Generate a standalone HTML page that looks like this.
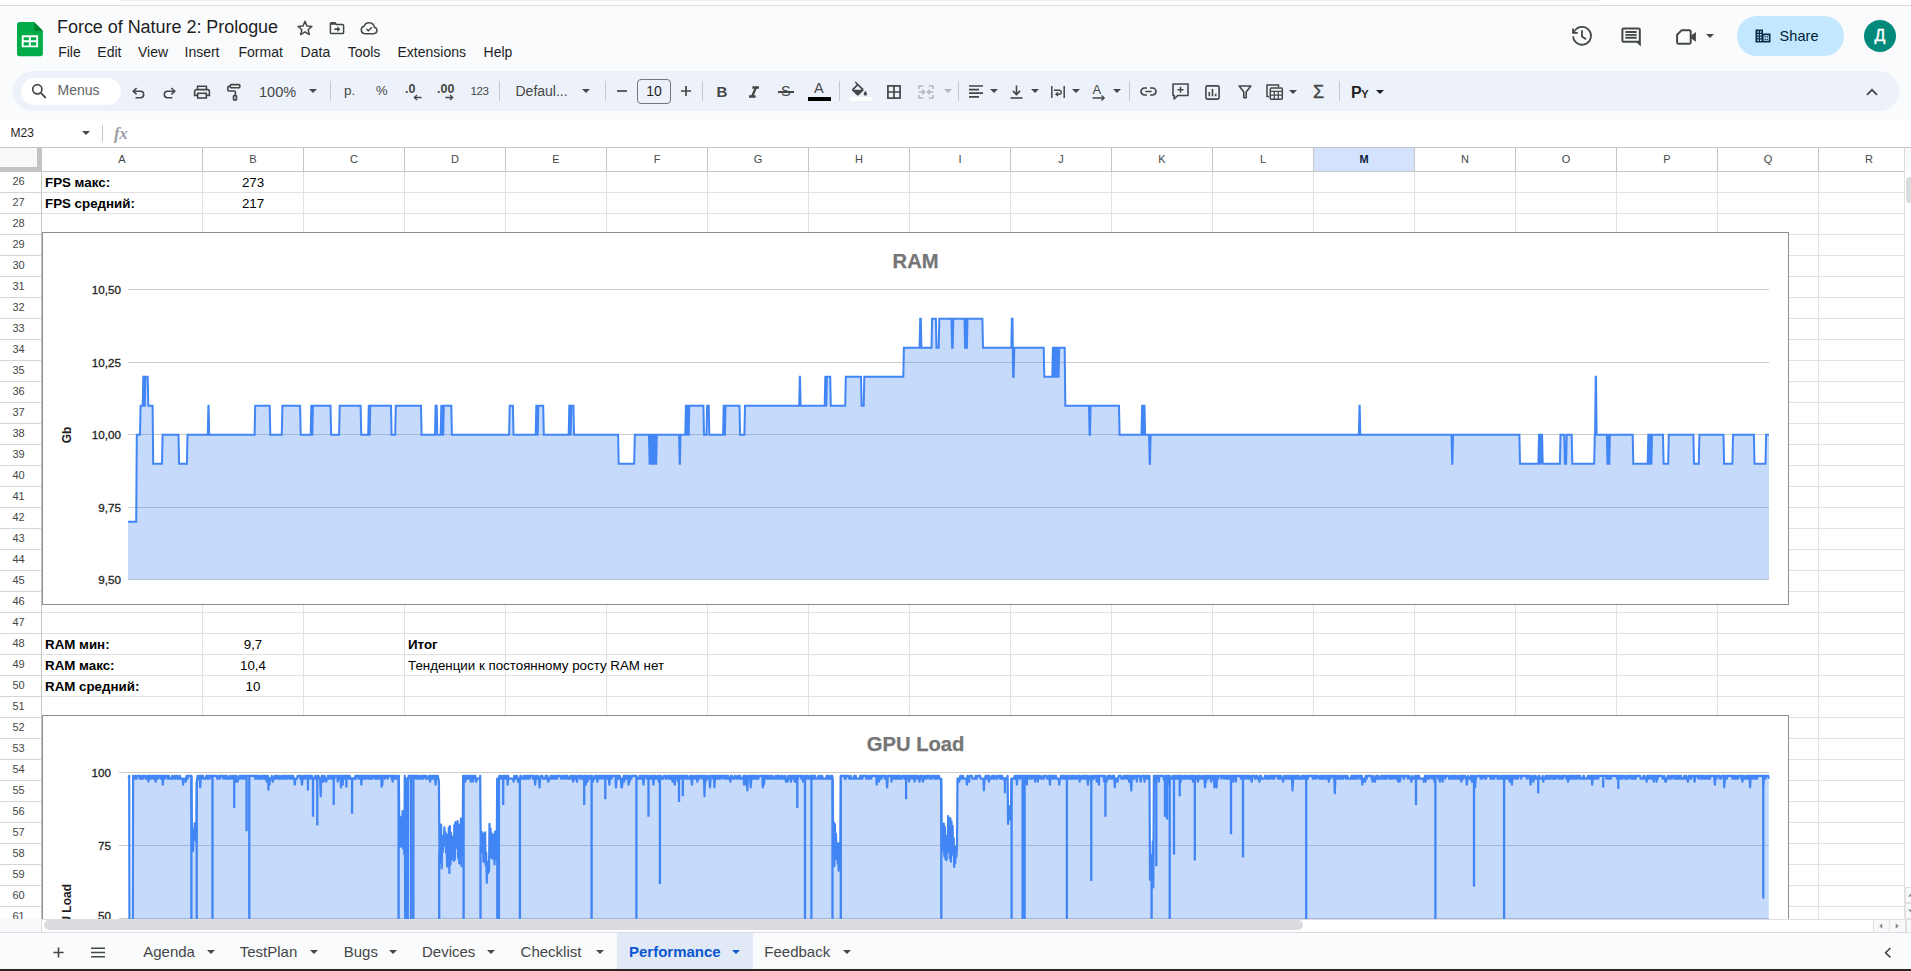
<!DOCTYPE html><html><head><meta charset="utf-8"><title>Force of Nature 2: Prologue</title><style>
*{box-sizing:border-box;margin:0;padding:0}
html,body{width:1911px;height:971px;overflow:hidden;background:#f9fbfd;font-family:"Liberation Sans",sans-serif;color:#1f1f1f}
.abs{position:absolute}
.t{position:absolute;white-space:nowrap;line-height:1}
.ic{position:absolute;overflow:visible}
.vsep{position:absolute;width:1px;background:#c7c7c7}
.hl{position:absolute;height:1px;background:#e1e1e1}
.vl{position:absolute;width:1px;background:#e1e1e1}
.rh{position:absolute;left:0;width:37px;text-align:center;font-size:11px;color:#444746;line-height:1}
.ch{position:absolute;top:153px;width:40px;margin-left:-20px;text-align:center;font-size:11px;color:#444746;line-height:1}
.cell{position:absolute;font-size:13.33px;line-height:1;white-space:nowrap;color:#000}
.b{font-weight:bold}
.tab{position:absolute;top:944px;font-size:15px;line-height:1;color:#444746;white-space:nowrap}
.dd{position:absolute;width:0;height:0;border-left:4px solid transparent;border-right:4px solid transparent;border-top:4px solid #444746}
</style></head><body>
<div class="abs" style="left:0;top:0;width:1911px;height:5px;background:#fff"></div>
<div class="abs" style="left:0;top:5px;width:1911px;height:1px;background:#dadce0"></div>
<div class="abs" style="left:116px;top:-13px;width:1488px;height:14px;border-radius:14px;background:#eceff1"></div>
<svg class="ic" style="left:17.1px;top:21.8px" width="26" height="35" viewBox="0 0 26 35">
<path d="M2.6 0H17.1L25.9 8.8V31.6a2.6 2.6 0 0 1-2.6 2.6H2.6a2.6 2.6 0 0 1-2.6-2.6V2.6a2.6 2.6 0 0 1 2.6-2.6z" fill="#00ac47"/>
<path d="M17.1 0.2L25.9 8.8H17.1z" fill="#00832d"/>
<path d="M4.75 13.3h16.35v12H4.75zM6.65 15.2v3.15h5.25V15.2zM13.8 15.2v3.15h5.4V15.2zM6.65 20.2v3.2h5.25v-3.2zM13.8 20.2v3.2h5.4v-3.2z" fill="#fff" fill-rule="evenodd"/>
</svg>
<div class="t" id="title" style="left:57px;top:18px;font-size:18px;letter-spacing:-0.04px;color:#1f1f1f">Force of Nature 2: Prologue</div>
<svg class="ic" style="left:296px;top:19px" width="18" height="18" viewBox="0 0 24 24"><path d="M12 3.2l2.6 6.1 6.6.6-5 4.4 1.5 6.5L12 17.3l-5.7 3.5 1.5-6.5-5-4.4 6.6-.6z" fill="none" stroke="#444746" stroke-width="2" stroke-linejoin="round"/></svg>
<svg class="ic" style="left:328px;top:19px" width="18" height="18" viewBox="0 0 24 24"><path d="M3.2 6.5a1.5 1.5 0 0 1 1.5-1.5h4.6l2 2.4h8a1.5 1.5 0 0 1 1.5 1.5v9a1.5 1.5 0 0 1-1.5 1.5H4.7a1.5 1.5 0 0 1-1.5-1.5z" fill="none" stroke="#444746" stroke-width="2" stroke-linejoin="round"/><path d="M3.2 5h6.2l2 2.6H3.2z" fill="#444746"/><path d="M8.5 12.4h4v-2.6l4 3.7-4 3.7v-2.6h-4z" fill="#444746"/></svg>
<svg class="ic" style="left:359px;top:19px" width="20" height="18" viewBox="0 0 26 24"><path d="M7 19.5h12.5a4.3 4.3 0 0 0 .6-8.5A7 7 0 0 0 6.5 9.7 5 5 0 0 0 7 19.5z" fill="none" stroke="#444746" stroke-width="2" stroke-linejoin="round"/><path d="M9.5 13.2l2.6 2.6 4.8-4.8" fill="none" stroke="#444746" stroke-width="1.9"/></svg>
<div class="t" style="left:58.2px;top:45px;font-size:14px;color:#1f1f1f">File</div>
<div class="t" style="left:97.3px;top:45px;font-size:14px;color:#1f1f1f">Edit</div>
<div class="t" style="left:138.0px;top:45px;font-size:14px;color:#1f1f1f">View</div>
<div class="t" style="left:184.5px;top:45px;font-size:14px;color:#1f1f1f">Insert</div>
<div class="t" style="left:238.5px;top:45px;font-size:14px;color:#1f1f1f">Format</div>
<div class="t" style="left:300.6px;top:45px;font-size:14px;color:#1f1f1f">Data</div>
<div class="t" style="left:347.7px;top:45px;font-size:14px;color:#1f1f1f">Tools</div>
<div class="t" style="left:397.5px;top:45px;font-size:14px;color:#1f1f1f">Extensions</div>
<div class="t" style="left:483.6px;top:45px;font-size:14px;color:#1f1f1f">Help</div>
<svg class="ic" style="left:1570px;top:24px" width="24" height="24" viewBox="0 0 24 24"><path d="M3.16 12.27A8.9 8.9 0 1 0 4.76 6.7" fill="none" stroke="#444746" stroke-width="1.8"/><path d="M3 4.4V8.95H7.7" fill="none" stroke="#444746" stroke-width="1.8"/><path d="M3 5.4L6.8 8.95H3z" fill="#444746"/><path d="M12 6.2V12.4L16.1 15.2" fill="none" stroke="#444746" stroke-width="1.8"/></svg>
<svg class="ic" style="left:1619px;top:24px" width="24" height="24" viewBox="0 0 24 24"><rect x="3.4" y="4.4" width="17.4" height="13.3" rx="1.2" fill="none" stroke="#444746" stroke-width="2"/><path d="M17 17.7L21.8 22.6V17z" fill="#444746"/><path d="M6.4 8h11.3M6.4 10.9h11.3M6.4 13.8h11.3" stroke="#444746" stroke-width="1.9"/></svg>
<svg class="ic" style="left:1674px;top:24px" width="24" height="24" viewBox="0 0 24 24"><path d="M7.5 6.35H15.2a1.5 1.5 0 0 1 1.5 1.5V18.15a1.5 1.5 0 0 1-1.5 1.5H4.6a1.5 1.5 0 0 1-1.5-1.5V10.8z" fill="none" stroke="#444746" stroke-width="2" stroke-linejoin="round"/><path d="M17.2 11.4l4.7-3.4v9.8l-4.7-3.4z" fill="#444746"/></svg>
<div class="dd" style="left:1706px;top:34px"></div>
<div class="abs" style="left:1737px;top:16px;width:107px;height:40px;border-radius:20px;background:#c2e7ff"></div>
<svg class="ic" style="left:1755px;top:28px" width="16" height="16" viewBox="0 0 16 16"><path d="M0.5 1.5h7.5v4h7.5v9H0.5z" fill="#0b2a4a"/><path d="M2.3 3.3h1.5v1.5H2.3zM5 3.3h1.5v1.5H5zM2.3 6h1.5v1.5H2.3zM5 6h1.5v1.5H5zM2.3 8.7h1.5v1.5H2.3zM5 8.7h1.5v1.5H5zM2.3 11.4h1.5v1.5H2.3zM5 11.4h1.5v1.5H5zM8.6 7.2h5.2v5.6H8.6zM9.6 8.3v1.3h1.3V8.3zM9.6 10.7v1.3h1.3v-1.3zM11.6 8.3v1.3h1.3V8.3zM11.6 10.7v1.3h1.3v-1.3z" fill="#c2e7ff" fill-rule="evenodd"/></svg>
<div class="t" style="left:1779.5px;top:29px;font-size:14.5px;color:#001d35;font-weight:500;letter-spacing:0.1px">Share</div>
<div class="abs" style="left:1864px;top:20px;width:32px;height:32px;border-radius:16px;background:#00897b"></div>
<div class="t" style="left:1864px;top:27.5px;width:32px;text-align:center;font-size:16px;color:#fff;-webkit-text-stroke:0.4px #fff">Д</div>
<div class="abs" style="left:13px;top:71px;width:1886px;height:40px;border-radius:20px;background:#edf2fa"></div>
<div class="abs" style="left:21px;top:77.5px;width:100px;height:27px;border-radius:14px;background:#fff"></div>
<svg class="ic" style="left:30.5px;top:83.0px" width="16" height="16" viewBox="0 0 16 16"><circle cx="6.3" cy="6.3" r="4.6" fill="none" stroke="#444746" stroke-width="1.7"/><path d="M9.8 9.8l5 5" stroke="#444746" stroke-width="1.9"/></svg>
<div class="t" style="left:57.5px;top:83.2px;font-size:14px;color:#5f6368">Menus</div>
<svg class="ic" style="left:131.0px;top:85.8px" width="14" height="13" viewBox="0 0 14 13"><path d="M2.8 5.2h6.6a3.3 3.3 0 0 1 0 6.6H4.6" fill="none" stroke="#444746" stroke-width="1.6"/><path d="M5.6 2L2.3 5.2l3.3 3.2" fill="none" stroke="#444746" stroke-width="1.6"/></svg>
<svg class="ic" style="left:163.0px;top:85.8px" width="14" height="13" viewBox="0 0 14 13"><path d="M11.2 5.2H4.6a3.3 3.3 0 0 0 0 6.6h4.8" fill="none" stroke="#444746" stroke-width="1.6"/><path d="M8.4 2l3.3 3.2-3.3 3.2" fill="none" stroke="#444746" stroke-width="1.6"/></svg>
<svg class="ic" style="left:193.0px;top:84.0px" width="18" height="16" viewBox="0 0 18 16"><path d="M4.6 5.6V2.3h8.8v3.3" fill="none" stroke="#444746" stroke-width="1.6"/><path d="M4.3 11.4H1.6V7.6a2 2 0 0 1 2-2h10.8a2 2 0 0 1 2 2v3.8h-2.7" fill="none" stroke="#444746" stroke-width="1.6"/><rect x="4.7" y="9.3" width="8.6" height="4.7" fill="none" stroke="#444746" stroke-width="1.6"/></svg>
<svg class="ic" style="left:225.5px;top:82.6px" width="16" height="18" viewBox="0 0 16 18"><rect x="4.3" y="1.6" width="9.5" height="3.2" rx="0.9" fill="none" stroke="#444746" stroke-width="1.6"/><path d="M4.3 3.4H3a1.2 1.2 0 0 0-1.2 1.2V6.8a1.2 1.2 0 0 0 1.2 1.2h5.2a1.2 1.2 0 0 1 1.2 1.2v3" fill="none" stroke="#444746" stroke-width="1.6"/><rect x="7.5" y="12.6" width="3" height="4.3" rx="0.7" fill="none" stroke="#444746" stroke-width="1.6"/></svg>
<div class="t" style="left:259px;top:85px;font-size:14.5px;color:#444746">100%</div>
<div class="dd" style="left:309.0px;top:89.0px;border-top-color:#444746"></div>
<div class="vsep" style="left:330.0px;top:81px;height:20px"></div>
<div class="t" style="left:344px;top:84px;font-size:13.5px;color:#444746">р.</div>
<div class="t" style="left:376px;top:84px;font-size:13px;color:#444746">%</div>
<div class="t" style="left:405px;top:83px;font-size:12.5px;color:#444746;font-weight:bold">.0</div>
<svg class="ic" style="left:413.0px;top:93.5px" width="9" height="7" viewBox="0 0 9 7"><path d="M8.5 3.5H1.5M4 1L1.3 3.5 4 6" fill="none" stroke="#444746" stroke-width="1.3"/></svg>
<div class="t" style="left:437px;top:83px;font-size:12.5px;color:#444746;font-weight:bold">.00</div>
<svg class="ic" style="left:445.0px;top:93.5px" width="9" height="7" viewBox="0 0 9 7"><path d="M0.5 3.5h7M5 1l2.7 2.5L5 6" fill="none" stroke="#444746" stroke-width="1.3"/></svg>
<div class="t" style="left:470.5px;top:85.5px;font-size:11.5px;color:#444746;letter-spacing:-0.4px">123</div>
<div class="vsep" style="left:499.0px;top:81px;height:20px"></div>
<div class="t" style="left:515.5px;top:84px;font-size:14px;color:#444746">Defaul...</div>
<div class="dd" style="left:582.0px;top:89.0px;border-top-color:#444746"></div>
<div class="vsep" style="left:605.0px;top:81px;height:20px"></div>
<svg class="ic" style="left:615.5px;top:85.0px" width="12" height="12" viewBox="0 0 12 12"><path d="M1 6h10" stroke="#444746" stroke-width="1.7"/></svg>
<div class="abs" style="left:637px;top:79px;width:34px;height:24.5px;border:1px solid #747775;border-radius:4px"></div>
<div class="t" style="left:637px;top:84px;width:34px;text-align:center;font-size:14px;color:#1f1f1f">10</div>
<svg class="ic" style="left:680.0px;top:85.0px" width="12" height="12" viewBox="0 0 12 12"><path d="M1 6h10M6 1v10" stroke="#444746" stroke-width="1.7"/></svg>
<div class="vsep" style="left:702.0px;top:81px;height:20px"></div>
<div class="t" style="left:716.5px;top:83.6px;font-size:15px;color:#444746;font-weight:bold">B</div>
<svg class="ic" style="left:748.0px;top:84.5px" width="12" height="14" viewBox="0 0 12 14"><path d="M4 0v3h2.21l-3.42 8H0v3h8v-3H5.79l3.42-8H12V0z" fill="#444746" transform="translate(1,1.2) scale(0.833)"/></svg>
<div class="t" style="left:781px;top:84px;font-size:14.5px;color:#444746">S</div>
<div class="abs" style="left:778px;top:91px;width:16px;height:1.6px;background:#444746"></div>
<div class="t" style="left:814px;top:81px;font-size:14.5px;color:#444746">A</div>
<div class="abs" style="left:808px;top:97px;width:23px;height:4px;background:#000"></div>
<div class="vsep" style="left:839.0px;top:81px;height:20px"></div>
<svg class="ic" style="left:850.3px;top:80.6px" width="19" height="15" viewBox="2.5 -0.5 19 18"><path d="M16.56 8.94L7.62 0 6.21 1.41l2.38 2.38-5.15 5.15c-.59.59-.59 1.54 0 2.12l5.5 5.5c.29.29.68.44 1.06.44s.77-.15 1.06-.44l5.5-5.5c.59-.58.59-1.53 0-2.12zM5.21 10L10 5.21 14.79 10H5.21zM19 11.5s-2 2.17-2 3.5c0 1.1.9 2 2 2s2-.9 2-2c0-1.33-2-3.5-2-3.5z" fill="#444746"/></svg>
<div class="abs" style="left:849.5px;top:97px;width:22.5px;height:4px;background:#fff"></div>
<svg class="ic" style="left:887.0px;top:84.5px" width="14" height="14" viewBox="0 0 14 14"><rect x="0.9" y="0.9" width="12.2" height="12.2" fill="none" stroke="#444746" stroke-width="1.7"/><path d="M7 1v12M1 7h12" stroke="#444746" stroke-width="1.7"/></svg>
<svg class="ic" style="left:918.0px;top:84.8px" width="16" height="14" viewBox="0 0 16 14"><path d="M1 4V1h4.2M10.8 1H15v3M1 10v3h4.2M10.8 13H15v-3" fill="none" stroke="#b4b7ba" stroke-width="1.6"/><path d="M0.8 7h5.4M4.2 4.7L6.6 7 4.2 9.3M15.2 7H9.8M11.8 4.7L9.4 7l2.4 2.3" fill="none" stroke="#b4b7ba" stroke-width="1.5"/></svg>
<div class="dd" style="left:944.0px;top:89.0px;border-top-color:#b4b7ba"></div>
<div class="vsep" style="left:958.0px;top:81px;height:20px"></div>
<svg class="ic" style="left:968.5px;top:85.3px" width="14" height="13" viewBox="0 0 14 13"><path d="M0 1h14M0 4.6h10M0 8.2h14M0 11.8h10" stroke="#444746" stroke-width="1.7"/></svg>
<div class="dd" style="left:990.0px;top:89.0px;border-top-color:#444746"></div>
<svg class="ic" style="left:1010.0px;top:84.5px" width="13" height="14" viewBox="0 0 13 14"><path d="M6.5 0.5v8.7M2.9 5.9l3.6 3.6 3.6-3.6" fill="none" stroke="#444746" stroke-width="1.6"/><path d="M0.5 13h12" stroke="#444746" stroke-width="1.6"/></svg>
<div class="dd" style="left:1031.0px;top:89.0px;border-top-color:#444746"></div>
<svg class="ic" style="left:1051.0px;top:85.5px" width="14" height="12" viewBox="0 0 14 12"><path d="M0.8 0v12M13.2 0v12" stroke="#444746" stroke-width="1.5"/><path d="M3 4.2h5.2a2 2 0 0 1 0 4H5.4" fill="none" stroke="#444746" stroke-width="1.4"/><path d="M7 6.3L4.9 8.2 7 10.1" fill="none" stroke="#444746" stroke-width="1.3"/></svg>
<div class="dd" style="left:1072.0px;top:89.0px;border-top-color:#444746"></div>
<div class="t" style="left:1092.5px;top:83px;font-size:13px;color:#444746">A</div>
<svg class="ic" style="left:1092.0px;top:95.0px" width="14" height="6" viewBox="0 0 14 6"><path d="M0.5 3h11.5M9.5 0.6L12.2 3 9.5 5.4" fill="none" stroke="#444746" stroke-width="1.3"/></svg>
<div class="dd" style="left:1113.0px;top:89.0px;border-top-color:#444746"></div>
<div class="vsep" style="left:1129.0px;top:81px;height:20px"></div>
<svg class="ic" style="left:1140.2px;top:87.0px" width="17" height="9" viewBox="0 0 17 9"><path d="M7 1H4.5a3.5 3.5 0 0 0 0 7H7M10 1h2.5a3.5 3.5 0 0 1 0 7H10M5.3 4.5h6.4" fill="none" stroke="#444746" stroke-width="1.7"/></svg>
<svg class="ic" style="left:1172.2px;top:83.0px" width="17" height="17" viewBox="0 0 17 17"><path d="M16 1H1v11.5h1.2V16l3.5-3.5H16z" fill="none" stroke="#444746" stroke-width="1.6" stroke-linejoin="round"/><path d="M8.5 3.8v6M5.5 6.8h6" stroke="#444746" stroke-width="1.5"/></svg>
<svg class="ic" style="left:1205.3px;top:84.8px" width="15" height="15" viewBox="0 0 15 15"><rect x="0.9" y="0.9" width="13.2" height="13.2" rx="1.5" fill="none" stroke="#444746" stroke-width="1.6"/><path d="M4.3 11.3V7M7.5 11.3V4M10.7 11.3V8.8" stroke="#444746" stroke-width="1.6"/></svg>
<svg class="ic" style="left:1237.8px;top:85.3px" width="14" height="14" viewBox="0 0 14 14"><path d="M1.2 1h11.6L8.2 7v5.8H5.8V7z" fill="none" stroke="#444746" stroke-width="1.6" stroke-linejoin="round"/></svg>
<svg class="ic" style="left:1265.9px;top:84.3px" width="17" height="16" viewBox="0 0 17 16"><path d="M3.2 12.5H1V1h11.5v2" fill="none" stroke="#444746" stroke-width="1.5"/><rect x="4.3" y="4" width="12" height="11.2" rx="1" fill="none" stroke="#444746" stroke-width="1.5"/><path d="M4.3 7.3h12M8.3 7.3v8M12.3 7.3v8M4.3 11.2h12" stroke="#444746" stroke-width="1.2"/></svg>
<div class="dd" style="left:1289.0px;top:90.0px;border-top-color:#444746"></div>
<div class="t" style="left:1313px;top:83px;font-size:18px;color:#444746;-webkit-text-stroke:0.4px #444746">Σ</div>
<div class="vsep" style="left:1339.0px;top:81px;height:20px"></div>
<div class="t" style="left:1351px;top:85px;font-size:16px;color:#1f1f1f;font-weight:bold;letter-spacing:-0.5px">P<span style="font-size:11px">Y</span></div>
<div class="dd" style="left:1376.0px;top:90.0px;border-top-color:#1f1f1f"></div>
<svg class="ic" style="left:1866.0px;top:88.0px" width="12" height="8" viewBox="0 0 12 8"><path d="M1 6.8L6 1.8l5 5" fill="none" stroke="#444746" stroke-width="1.7"/></svg>
<div class="abs" style="left:0;top:119px;width:1911px;height:28px;background:#fff"></div>
<div class="t" style="left:10.5px;top:127px;font-size:12px;color:#1f1f1f">M23</div>
<div class="dd" style="left:82px;top:131px"></div>
<div class="vsep" style="left:102px;top:125px;height:17px"></div>
<div class="t" style="left:114px;top:125px;font-size:17px;font-weight:bold;color:#9aa0a6;font-style:italic;font-family:'Liberation Serif',serif;letter-spacing:-0.5px">fx</div>
<div class="abs" id="grid" style="left:0;top:147px;width:1911px;height:772px;background:#fff;overflow:hidden">
<div class="abs" style="left:1314px;top:1px;width:100px;height:23px;background:#d3e3fd"></div>
<div class="hl" style="left:42px;top:45px;width:1863px"></div>
<div class="hl" style="left:0;top:45px;width:42px;background:#d5d7d6"></div>
<div class="hl" style="left:42px;top:66px;width:1863px"></div>
<div class="hl" style="left:0;top:66px;width:42px;background:#d5d7d6"></div>
<div class="hl" style="left:42px;top:87px;width:1863px"></div>
<div class="hl" style="left:0;top:87px;width:42px;background:#d5d7d6"></div>
<div class="hl" style="left:42px;top:108px;width:1863px"></div>
<div class="hl" style="left:0;top:108px;width:42px;background:#d5d7d6"></div>
<div class="hl" style="left:42px;top:129px;width:1863px"></div>
<div class="hl" style="left:0;top:129px;width:42px;background:#d5d7d6"></div>
<div class="hl" style="left:42px;top:150px;width:1863px"></div>
<div class="hl" style="left:0;top:150px;width:42px;background:#d5d7d6"></div>
<div class="hl" style="left:42px;top:171px;width:1863px"></div>
<div class="hl" style="left:0;top:171px;width:42px;background:#d5d7d6"></div>
<div class="hl" style="left:42px;top:192px;width:1863px"></div>
<div class="hl" style="left:0;top:192px;width:42px;background:#d5d7d6"></div>
<div class="hl" style="left:42px;top:213px;width:1863px"></div>
<div class="hl" style="left:0;top:213px;width:42px;background:#d5d7d6"></div>
<div class="hl" style="left:42px;top:234px;width:1863px"></div>
<div class="hl" style="left:0;top:234px;width:42px;background:#d5d7d6"></div>
<div class="hl" style="left:42px;top:255px;width:1863px"></div>
<div class="hl" style="left:0;top:255px;width:42px;background:#d5d7d6"></div>
<div class="hl" style="left:42px;top:276px;width:1863px"></div>
<div class="hl" style="left:0;top:276px;width:42px;background:#d5d7d6"></div>
<div class="hl" style="left:42px;top:297px;width:1863px"></div>
<div class="hl" style="left:0;top:297px;width:42px;background:#d5d7d6"></div>
<div class="hl" style="left:42px;top:318px;width:1863px"></div>
<div class="hl" style="left:0;top:318px;width:42px;background:#d5d7d6"></div>
<div class="hl" style="left:42px;top:339px;width:1863px"></div>
<div class="hl" style="left:0;top:339px;width:42px;background:#d5d7d6"></div>
<div class="hl" style="left:42px;top:360px;width:1863px"></div>
<div class="hl" style="left:0;top:360px;width:42px;background:#d5d7d6"></div>
<div class="hl" style="left:42px;top:381px;width:1863px"></div>
<div class="hl" style="left:0;top:381px;width:42px;background:#d5d7d6"></div>
<div class="hl" style="left:42px;top:402px;width:1863px"></div>
<div class="hl" style="left:0;top:402px;width:42px;background:#d5d7d6"></div>
<div class="hl" style="left:42px;top:423px;width:1863px"></div>
<div class="hl" style="left:0;top:423px;width:42px;background:#d5d7d6"></div>
<div class="hl" style="left:42px;top:444px;width:1863px"></div>
<div class="hl" style="left:0;top:444px;width:42px;background:#d5d7d6"></div>
<div class="hl" style="left:42px;top:465px;width:1863px"></div>
<div class="hl" style="left:0;top:465px;width:42px;background:#d5d7d6"></div>
<div class="hl" style="left:42px;top:486px;width:1863px"></div>
<div class="hl" style="left:0;top:486px;width:42px;background:#d5d7d6"></div>
<div class="hl" style="left:42px;top:507px;width:1863px"></div>
<div class="hl" style="left:0;top:507px;width:42px;background:#d5d7d6"></div>
<div class="hl" style="left:42px;top:528px;width:1863px"></div>
<div class="hl" style="left:0;top:528px;width:42px;background:#d5d7d6"></div>
<div class="hl" style="left:42px;top:549px;width:1863px"></div>
<div class="hl" style="left:0;top:549px;width:42px;background:#d5d7d6"></div>
<div class="hl" style="left:42px;top:570px;width:1863px"></div>
<div class="hl" style="left:0;top:570px;width:42px;background:#d5d7d6"></div>
<div class="hl" style="left:42px;top:591px;width:1863px"></div>
<div class="hl" style="left:0;top:591px;width:42px;background:#d5d7d6"></div>
<div class="hl" style="left:42px;top:612px;width:1863px"></div>
<div class="hl" style="left:0;top:612px;width:42px;background:#d5d7d6"></div>
<div class="hl" style="left:42px;top:633px;width:1863px"></div>
<div class="hl" style="left:0;top:633px;width:42px;background:#d5d7d6"></div>
<div class="hl" style="left:42px;top:654px;width:1863px"></div>
<div class="hl" style="left:0;top:654px;width:42px;background:#d5d7d6"></div>
<div class="hl" style="left:42px;top:675px;width:1863px"></div>
<div class="hl" style="left:0;top:675px;width:42px;background:#d5d7d6"></div>
<div class="hl" style="left:42px;top:696px;width:1863px"></div>
<div class="hl" style="left:0;top:696px;width:42px;background:#d5d7d6"></div>
<div class="hl" style="left:42px;top:717px;width:1863px"></div>
<div class="hl" style="left:0;top:717px;width:42px;background:#d5d7d6"></div>
<div class="hl" style="left:42px;top:738px;width:1863px"></div>
<div class="hl" style="left:0;top:738px;width:42px;background:#d5d7d6"></div>
<div class="hl" style="left:42px;top:759px;width:1863px"></div>
<div class="hl" style="left:0;top:759px;width:42px;background:#d5d7d6"></div>
<div class="hl" style="left:42px;top:780px;width:1863px"></div>
<div class="hl" style="left:0;top:780px;width:42px;background:#d5d7d6"></div>
<div class="vl" style="left:202px;top:25px;height:750px"></div>
<div class="vl" style="left:202px;top:1px;height:23px;background:#c4c7c5"></div>
<div class="vl" style="left:303px;top:25px;height:750px"></div>
<div class="vl" style="left:303px;top:1px;height:23px;background:#c4c7c5"></div>
<div class="vl" style="left:404px;top:25px;height:750px"></div>
<div class="vl" style="left:404px;top:1px;height:23px;background:#c4c7c5"></div>
<div class="vl" style="left:505px;top:25px;height:750px"></div>
<div class="vl" style="left:505px;top:1px;height:23px;background:#c4c7c5"></div>
<div class="vl" style="left:606px;top:25px;height:750px"></div>
<div class="vl" style="left:606px;top:1px;height:23px;background:#c4c7c5"></div>
<div class="vl" style="left:707px;top:25px;height:750px"></div>
<div class="vl" style="left:707px;top:1px;height:23px;background:#c4c7c5"></div>
<div class="vl" style="left:808px;top:25px;height:750px"></div>
<div class="vl" style="left:808px;top:1px;height:23px;background:#c4c7c5"></div>
<div class="vl" style="left:909px;top:25px;height:750px"></div>
<div class="vl" style="left:909px;top:1px;height:23px;background:#c4c7c5"></div>
<div class="vl" style="left:1010px;top:25px;height:750px"></div>
<div class="vl" style="left:1010px;top:1px;height:23px;background:#c4c7c5"></div>
<div class="vl" style="left:1111px;top:25px;height:750px"></div>
<div class="vl" style="left:1111px;top:1px;height:23px;background:#c4c7c5"></div>
<div class="vl" style="left:1212px;top:25px;height:750px"></div>
<div class="vl" style="left:1212px;top:1px;height:23px;background:#c4c7c5"></div>
<div class="vl" style="left:1313px;top:25px;height:750px"></div>
<div class="vl" style="left:1313px;top:1px;height:23px;background:#c4c7c5"></div>
<div class="vl" style="left:1414px;top:25px;height:750px"></div>
<div class="vl" style="left:1414px;top:1px;height:23px;background:#c4c7c5"></div>
<div class="vl" style="left:1515px;top:25px;height:750px"></div>
<div class="vl" style="left:1515px;top:1px;height:23px;background:#c4c7c5"></div>
<div class="vl" style="left:1616px;top:25px;height:750px"></div>
<div class="vl" style="left:1616px;top:1px;height:23px;background:#c4c7c5"></div>
<div class="vl" style="left:1717px;top:25px;height:750px"></div>
<div class="vl" style="left:1717px;top:1px;height:23px;background:#c4c7c5"></div>
<div class="vl" style="left:1818px;top:25px;height:750px"></div>
<div class="vl" style="left:1818px;top:1px;height:23px;background:#c4c7c5"></div>
<div class="abs" style="left:0;top:0;width:1911px;height:1px;background:#c4c7c5"></div>
<div class="abs" style="left:0;top:24px;width:1905px;height:1px;background:#c4c7c5"></div>
<div class="abs" style="left:41px;top:1px;width:1px;height:771px;background:#c4c7c5"></div>
<div class="abs" style="left:0;top:1px;width:41px;height:23px;background:#c3c3c3"></div>
<div class="abs" style="left:0;top:1px;width:37px;height:19px;background:#f8f9fa"></div>
<div class="ch" style="left:122px;top:7px;">A</div>
<div class="ch" style="left:253px;top:7px;">B</div>
<div class="ch" style="left:354px;top:7px;">C</div>
<div class="ch" style="left:455px;top:7px;">D</div>
<div class="ch" style="left:556px;top:7px;">E</div>
<div class="ch" style="left:657px;top:7px;">F</div>
<div class="ch" style="left:758px;top:7px;">G</div>
<div class="ch" style="left:859px;top:7px;">H</div>
<div class="ch" style="left:960px;top:7px;">I</div>
<div class="ch" style="left:1061px;top:7px;">J</div>
<div class="ch" style="left:1162px;top:7px;">K</div>
<div class="ch" style="left:1263px;top:7px;">L</div>
<div class="ch" style="left:1364px;top:7px;font-weight:bold;color:#0b1d42;">M</div>
<div class="ch" style="left:1465px;top:7px;">N</div>
<div class="ch" style="left:1566px;top:7px;">O</div>
<div class="ch" style="left:1667px;top:7px;">P</div>
<div class="ch" style="left:1768px;top:7px;">Q</div>
<div class="ch" style="left:1869px;top:7px;">R</div>
<div class="rh" style="top:29px">26</div>
<div class="rh" style="top:50px">27</div>
<div class="rh" style="top:71px">28</div>
<div class="rh" style="top:92px">29</div>
<div class="rh" style="top:113px">30</div>
<div class="rh" style="top:134px">31</div>
<div class="rh" style="top:155px">32</div>
<div class="rh" style="top:176px">33</div>
<div class="rh" style="top:197px">34</div>
<div class="rh" style="top:218px">35</div>
<div class="rh" style="top:239px">36</div>
<div class="rh" style="top:260px">37</div>
<div class="rh" style="top:281px">38</div>
<div class="rh" style="top:302px">39</div>
<div class="rh" style="top:323px">40</div>
<div class="rh" style="top:344px">41</div>
<div class="rh" style="top:365px">42</div>
<div class="rh" style="top:386px">43</div>
<div class="rh" style="top:407px">44</div>
<div class="rh" style="top:428px">45</div>
<div class="rh" style="top:449px">46</div>
<div class="rh" style="top:470px">47</div>
<div class="rh" style="top:491px">48</div>
<div class="rh" style="top:512px">49</div>
<div class="rh" style="top:533px">50</div>
<div class="rh" style="top:554px">51</div>
<div class="rh" style="top:575px">52</div>
<div class="rh" style="top:596px">53</div>
<div class="rh" style="top:617px">54</div>
<div class="rh" style="top:638px">55</div>
<div class="rh" style="top:659px">56</div>
<div class="rh" style="top:680px">57</div>
<div class="rh" style="top:701px">58</div>
<div class="rh" style="top:722px">59</div>
<div class="rh" style="top:743px">60</div>
<div class="rh" style="top:764px">61</div>
<div class="cell b" style="left:45.0px;top:29.0px;">FPS макс:</div>
<div class="cell" style="left:203.0px;top:29.0px;width:100px;text-align:center">273</div>
<div class="cell b" style="left:45.0px;top:50.0px;">FPS средний:</div>
<div class="cell" style="left:203.0px;top:50.0px;width:100px;text-align:center">217</div>
<div class="cell b" style="left:45.0px;top:491.0px;">RAM мин:</div>
<div class="cell" style="left:203.0px;top:491.0px;width:100px;text-align:center">9,7</div>
<div class="cell b" style="left:408.0px;top:491.0px;">Итог</div>
<div class="cell b" style="left:45.0px;top:512.0px;">RAM макс:</div>
<div class="cell" style="left:203.0px;top:512.0px;width:100px;text-align:center">10,4</div>
<div class="cell " style="left:408.0px;top:512.0px;">Тенденции к постоянному росту RAM нет</div>
<div class="cell b" style="left:45.0px;top:533.0px;">RAM средний:</div>
<div class="cell" style="left:203.0px;top:533.0px;width:100px;text-align:center">10</div>
<div class="abs" style="left:42px;top:85px;width:1747px;height:373px;background:#fff;border:1px solid #8e8e8e"></div>
<svg class="ic" style="left:0;top:0" width="1911" height="772" viewBox="0 147 1911 772">
<rect x="128" y="289" width="1641" height="1" fill="#cccccc"/>
<rect x="128" y="362" width="1641" height="1" fill="#cccccc"/>
<rect x="128" y="434" width="1641" height="1" fill="#cccccc"/>
<rect x="128" y="507" width="1641" height="1" fill="#cccccc"/>
<rect x="128" y="579" width="1641" height="1" fill="#cccccc"/>
<polygon points="128.0,579.5 128.0,521.8 136.2,521.8 136.8,434.8 140.0,434.8 140.6,405.8 142.7,405.8 143.3,376.8 144.0,376.8 144.6,405.8 144.8,405.8 145.4,376.8 147.7,376.8 148.3,405.8 152.6,405.8 153.2,463.7 162.0,463.7 162.6,434.8 178.5,434.8 179.1,463.7 186.9,463.7 187.5,434.8 207.8,434.8 208.4,405.8 208.6,405.8 209.2,434.8 254.6,434.8 255.2,405.8 269.7,405.8 270.3,434.8 281.8,434.8 282.4,405.8 300.1,405.8 300.7,434.8 310.7,434.8 311.3,405.8 311.5,405.8 312.1,434.8 312.3,434.8 312.9,405.8 330.5,405.8 331.1,434.8 339.1,434.8 339.7,405.8 360.6,405.8 361.2,434.8 368.2,434.8 368.8,405.8 369.0,405.8 369.6,434.8 369.7,434.8 370.3,405.8 391.0,405.8 391.6,434.8 395.2,434.8 395.8,405.8 421.0,405.8 421.6,434.8 435.0,434.8 435.6,405.8 436.7,405.8 437.3,434.8 440.7,434.8 441.3,405.8 442.0,405.8 442.6,434.8 443.2,434.8 443.8,405.8 451.3,405.8 451.9,434.8 509.1,434.8 509.7,405.8 512.9,405.8 513.5,434.8 535.7,434.8 536.3,405.8 536.7,405.8 537.3,434.8 537.7,434.8 538.3,405.8 543.2,405.8 543.8,434.8 568.7,434.8 569.3,405.8 569.7,405.8 570.3,434.8 570.7,434.8 571.3,405.8 573.4,405.8 574.0,434.8 618.1,434.8 618.7,463.7 634.2,463.7 634.8,434.8 649.0,434.8 649.6,463.7 649.8,463.7 650.4,434.8 650.6,434.8 651.2,463.7 651.4,463.7 652.0,434.8 652.2,434.8 652.8,463.7 653.0,463.7 653.6,434.8 653.8,434.8 654.4,463.7 654.6,463.7 655.2,434.8 655.4,434.8 656.0,463.7 656.2,463.7 656.8,434.8 656.9,434.8 657.5,434.8 679.1,434.8 679.7,463.7 679.9,463.7 680.5,434.8 685.3,434.8 685.9,405.8 686.2,405.8 686.8,434.8 687.0,434.8 687.6,405.8 687.9,405.8 688.5,434.8 688.7,434.8 689.3,405.8 703.4,405.8 704.0,434.8 706.5,434.8 707.1,405.8 708.7,405.8 709.3,434.8 723.1,434.8 723.7,405.8 724.0,405.8 724.6,434.8 724.9,434.8 725.5,405.8 739.5,405.8 740.1,434.8 744.4,434.8 745.0,405.8 799.2,405.8 799.8,376.8 800.0,376.8 800.6,405.8 824.7,405.8 825.3,376.8 825.5,376.8 826.1,405.8 826.3,405.8 826.9,376.8 830.2,376.8 830.8,405.8 845.2,405.8 845.8,376.8 861.0,376.8 861.6,405.8 863.7,405.8 864.3,376.8 903.3,376.8 903.9,347.7 919.6,347.7 920.2,318.7 920.8,318.7 921.4,347.7 931.5,347.7 932.1,318.7 935.9,318.7 936.5,347.7 938.7,347.7 939.3,318.7 951.5,318.7 952.1,347.7 952.7,347.7 953.3,318.7 964.5,318.7 965.1,347.7 965.3,347.7 965.9,318.7 966.1,318.7 966.7,347.7 966.9,347.7 967.5,318.7 982.4,318.7 983.0,347.7 1011.3,347.7 1011.9,318.7 1012.5,318.7 1013.1,376.8 1013.7,376.8 1014.3,347.7 1043.7,347.7 1044.3,376.8 1052.3,376.8 1052.9,347.7 1053.1,347.7 1053.7,376.8 1053.9,376.8 1054.5,347.7 1054.7,347.7 1055.3,376.8 1055.5,376.8 1056.1,347.7 1056.3,347.7 1056.9,376.8 1057.1,376.8 1057.7,347.7 1057.9,347.7 1058.5,376.8 1058.6,376.8 1059.2,347.7 1064.7,347.7 1065.3,405.8 1089.0,405.8 1089.6,434.8 1090.0,434.8 1090.6,405.8 1119.0,405.8 1119.6,434.8 1141.5,434.8 1142.1,405.8 1142.5,405.8 1143.1,434.8 1143.2,434.8 1143.8,405.8 1144.5,405.8 1145.1,434.8 1149.1,434.8 1149.7,463.7 1150.0,463.7 1150.6,434.8 1358.9,434.8 1359.5,405.8 1359.7,405.8 1360.3,434.8 1451.6,434.8 1452.2,463.7 1452.4,463.7 1453.0,434.8 1519.4,434.8 1520.0,463.7 1538.4,463.7 1539.0,434.8 1539.2,434.8 1539.8,463.7 1540.0,463.7 1540.6,434.8 1540.8,434.8 1541.4,463.7 1541.4,463.7 1542.0,434.8 1542.1,434.8 1542.7,463.7 1559.9,463.7 1560.5,434.8 1564.3,434.8 1564.9,463.7 1566.1,463.7 1566.7,434.8 1571.7,434.8 1572.3,463.7 1594.2,463.7 1594.8,434.8 1595.1,434.8 1595.7,376.8 1596.0,376.8 1596.6,434.8 1606.9,434.8 1607.5,463.7 1607.7,463.7 1608.3,434.8 1608.5,434.8 1609.1,463.7 1609.3,463.7 1609.9,434.8 1632.7,434.8 1633.3,463.7 1647.7,463.7 1648.3,434.8 1648.7,434.8 1649.3,463.7 1649.7,463.7 1650.3,434.8 1650.5,434.8 1651.1,463.7 1651.4,463.7 1652.0,434.8 1663.0,434.8 1663.6,463.7 1668.2,463.7 1668.8,434.8 1693.4,434.8 1694.0,463.7 1698.8,463.7 1699.4,434.8 1723.5,434.8 1724.1,463.7 1732.4,463.7 1733.0,434.8 1753.9,434.8 1754.5,463.7 1765.5,463.7 1766.1,434.8 1769.0,434.8 1769.0,579.5" fill="#4285f4" fill-opacity="0.3"/>
<polyline points="128.0,521.8 136.2,521.8 136.8,434.8 140.0,434.8 140.6,405.8 142.7,405.8 143.3,376.8 144.0,376.8 144.6,405.8 144.8,405.8 145.4,376.8 147.7,376.8 148.3,405.8 152.6,405.8 153.2,463.7 162.0,463.7 162.6,434.8 178.5,434.8 179.1,463.7 186.9,463.7 187.5,434.8 207.8,434.8 208.4,405.8 208.6,405.8 209.2,434.8 254.6,434.8 255.2,405.8 269.7,405.8 270.3,434.8 281.8,434.8 282.4,405.8 300.1,405.8 300.7,434.8 310.7,434.8 311.3,405.8 311.5,405.8 312.1,434.8 312.3,434.8 312.9,405.8 330.5,405.8 331.1,434.8 339.1,434.8 339.7,405.8 360.6,405.8 361.2,434.8 368.2,434.8 368.8,405.8 369.0,405.8 369.6,434.8 369.7,434.8 370.3,405.8 391.0,405.8 391.6,434.8 395.2,434.8 395.8,405.8 421.0,405.8 421.6,434.8 435.0,434.8 435.6,405.8 436.7,405.8 437.3,434.8 440.7,434.8 441.3,405.8 442.0,405.8 442.6,434.8 443.2,434.8 443.8,405.8 451.3,405.8 451.9,434.8 509.1,434.8 509.7,405.8 512.9,405.8 513.5,434.8 535.7,434.8 536.3,405.8 536.7,405.8 537.3,434.8 537.7,434.8 538.3,405.8 543.2,405.8 543.8,434.8 568.7,434.8 569.3,405.8 569.7,405.8 570.3,434.8 570.7,434.8 571.3,405.8 573.4,405.8 574.0,434.8 618.1,434.8 618.7,463.7 634.2,463.7 634.8,434.8 649.0,434.8 649.6,463.7 649.8,463.7 650.4,434.8 650.6,434.8 651.2,463.7 651.4,463.7 652.0,434.8 652.2,434.8 652.8,463.7 653.0,463.7 653.6,434.8 653.8,434.8 654.4,463.7 654.6,463.7 655.2,434.8 655.4,434.8 656.0,463.7 656.2,463.7 656.8,434.8 656.9,434.8 657.5,434.8 679.1,434.8 679.7,463.7 679.9,463.7 680.5,434.8 685.3,434.8 685.9,405.8 686.2,405.8 686.8,434.8 687.0,434.8 687.6,405.8 687.9,405.8 688.5,434.8 688.7,434.8 689.3,405.8 703.4,405.8 704.0,434.8 706.5,434.8 707.1,405.8 708.7,405.8 709.3,434.8 723.1,434.8 723.7,405.8 724.0,405.8 724.6,434.8 724.9,434.8 725.5,405.8 739.5,405.8 740.1,434.8 744.4,434.8 745.0,405.8 799.2,405.8 799.8,376.8 800.0,376.8 800.6,405.8 824.7,405.8 825.3,376.8 825.5,376.8 826.1,405.8 826.3,405.8 826.9,376.8 830.2,376.8 830.8,405.8 845.2,405.8 845.8,376.8 861.0,376.8 861.6,405.8 863.7,405.8 864.3,376.8 903.3,376.8 903.9,347.7 919.6,347.7 920.2,318.7 920.8,318.7 921.4,347.7 931.5,347.7 932.1,318.7 935.9,318.7 936.5,347.7 938.7,347.7 939.3,318.7 951.5,318.7 952.1,347.7 952.7,347.7 953.3,318.7 964.5,318.7 965.1,347.7 965.3,347.7 965.9,318.7 966.1,318.7 966.7,347.7 966.9,347.7 967.5,318.7 982.4,318.7 983.0,347.7 1011.3,347.7 1011.9,318.7 1012.5,318.7 1013.1,376.8 1013.7,376.8 1014.3,347.7 1043.7,347.7 1044.3,376.8 1052.3,376.8 1052.9,347.7 1053.1,347.7 1053.7,376.8 1053.9,376.8 1054.5,347.7 1054.7,347.7 1055.3,376.8 1055.5,376.8 1056.1,347.7 1056.3,347.7 1056.9,376.8 1057.1,376.8 1057.7,347.7 1057.9,347.7 1058.5,376.8 1058.6,376.8 1059.2,347.7 1064.7,347.7 1065.3,405.8 1089.0,405.8 1089.6,434.8 1090.0,434.8 1090.6,405.8 1119.0,405.8 1119.6,434.8 1141.5,434.8 1142.1,405.8 1142.5,405.8 1143.1,434.8 1143.2,434.8 1143.8,405.8 1144.5,405.8 1145.1,434.8 1149.1,434.8 1149.7,463.7 1150.0,463.7 1150.6,434.8 1358.9,434.8 1359.5,405.8 1359.7,405.8 1360.3,434.8 1451.6,434.8 1452.2,463.7 1452.4,463.7 1453.0,434.8 1519.4,434.8 1520.0,463.7 1538.4,463.7 1539.0,434.8 1539.2,434.8 1539.8,463.7 1540.0,463.7 1540.6,434.8 1540.8,434.8 1541.4,463.7 1541.4,463.7 1542.0,434.8 1542.1,434.8 1542.7,463.7 1559.9,463.7 1560.5,434.8 1564.3,434.8 1564.9,463.7 1566.1,463.7 1566.7,434.8 1571.7,434.8 1572.3,463.7 1594.2,463.7 1594.8,434.8 1595.1,434.8 1595.7,376.8 1596.0,376.8 1596.6,434.8 1606.9,434.8 1607.5,463.7 1607.7,463.7 1608.3,434.8 1608.5,434.8 1609.1,463.7 1609.3,463.7 1609.9,434.8 1632.7,434.8 1633.3,463.7 1647.7,463.7 1648.3,434.8 1648.7,434.8 1649.3,463.7 1649.7,463.7 1650.3,434.8 1650.5,434.8 1651.1,463.7 1651.4,463.7 1652.0,434.8 1663.0,434.8 1663.6,463.7 1668.2,463.7 1668.8,434.8 1693.4,434.8 1694.0,463.7 1698.8,463.7 1699.4,434.8 1723.5,434.8 1724.1,463.7 1732.4,463.7 1733.0,434.8 1753.9,434.8 1754.5,463.7 1765.5,463.7 1766.1,434.8 1769.0,434.8" fill="none" stroke="#4285f4" stroke-width="2" stroke-linejoin="miter"/>
</svg>
<div class="t" style="left:815.6px;top:104px;width:200px;text-align:center;font-size:20.2px;font-weight:bold;color:#757575;-webkit-text-stroke:0.25px #757575">RAM</div>
<div class="t" style="left:61px;top:137.0px;width:60px;text-align:right;font-size:11.7px;color:#222;-webkit-text-stroke:0.28px #222">10,50</div>
<div class="t" style="left:61px;top:209.5px;width:60px;text-align:right;font-size:11.7px;color:#222;-webkit-text-stroke:0.28px #222">10,25</div>
<div class="t" style="left:61px;top:282.0px;width:60px;text-align:right;font-size:11.7px;color:#222;-webkit-text-stroke:0.28px #222">10,00</div>
<div class="t" style="left:61px;top:354.5px;width:60px;text-align:right;font-size:11.7px;color:#222;-webkit-text-stroke:0.28px #222">9,75</div>
<div class="t" style="left:61px;top:427.0px;width:60px;text-align:right;font-size:11.7px;color:#222;-webkit-text-stroke:0.28px #222">9,50</div>
<div class="t" style="left:37px;top:282px;width:60px;text-align:center;font-size:12px;font-weight:bold;color:#222;transform:rotate(-90deg)">Gb</div>
<div class="abs" style="left:42px;top:568px;width:1747px;height:373px;background:#fff;border:1px solid #8e8e8e"></div>
<svg class="ic" style="left:0;top:569px;overflow:hidden" width="1911" height="203" viewBox="0 716 1911 203">
<rect x="119" y="772" width="1650" height="1" fill="#cccccc"/>
<rect x="119" y="845" width="1650" height="1" fill="#cccccc"/>
<rect x="119" y="918" width="1650" height="1" fill="#cccccc"/>
<polygon points="128.7,930 128.7,778.7 129.2,775.8 129.8,1064.9 130.4,1064.9 130.9,1064.9 131.5,1064.9 132.0,1064.9 132.6,1064.9 133.1,775.8 133.7,778.7 134.2,778.7 134.8,775.8 135.3,775.8 135.9,778.7 136.4,778.7 137.0,775.8 137.5,775.8 138.1,775.8 138.6,775.8 139.2,775.8 139.7,778.7 140.3,775.8 140.8,778.7 141.4,778.7 141.9,778.7 142.5,775.8 143.0,778.7 143.6,775.8 144.1,775.8 144.7,775.8 145.2,775.8 145.8,778.7 146.3,778.7 146.9,778.7 147.4,775.8 148.0,775.8 148.5,781.7 149.1,775.8 149.6,775.8 150.2,778.7 150.7,775.8 151.3,775.8 151.8,778.7 152.4,775.8 152.9,775.8 153.5,775.8 154.0,778.7 154.6,775.8 155.1,778.7 155.7,781.7 156.2,775.8 156.8,778.7 157.3,775.8 157.9,778.7 158.4,775.8 159.0,775.8 159.5,775.8 160.1,775.8 160.6,778.7 161.2,775.8 161.7,775.8 162.3,775.8 162.8,784.6 163.4,775.8 163.9,775.8 164.5,775.8 165.0,778.7 165.6,775.8 166.1,775.8 166.7,775.8 167.2,775.8 167.8,778.7 168.3,778.7 168.9,775.8 169.4,778.7 170.0,778.7 170.5,778.7 171.1,778.7 171.6,778.7 172.2,775.8 172.7,778.7 173.3,778.7 173.8,778.7 174.4,775.8 174.9,778.7 175.5,778.7 176.0,775.8 176.6,775.8 177.1,775.8 177.7,778.7 178.2,778.7 178.8,778.7 179.3,775.8 179.9,775.8 180.4,778.7 181.0,778.7 181.5,778.7 182.1,778.7 182.6,778.7 183.2,784.6 183.7,778.7 184.3,778.7 184.8,778.7 185.4,778.7 185.9,781.7 186.5,775.8 187.0,775.8 187.6,778.7 188.1,775.8 188.7,775.8 189.2,775.8 189.8,775.8 190.3,775.8 190.9,775.8 191.4,775.8 192.0,846.0 192.5,831.9 193.1,851.0 193.6,829.5 194.2,837.1 194.7,823.3 195.3,839.8 195.8,835.2 196.4,841.9 196.9,781.7 197.5,775.8 198.0,775.8 198.6,778.7 199.1,778.7 199.7,775.8 200.2,787.5 200.8,775.8 201.3,778.7 201.9,775.8 202.4,775.8 203.0,775.8 203.5,778.7 204.1,778.7 204.6,778.7 205.2,778.7 205.7,778.7 206.3,775.8 206.8,775.8 207.4,775.8 207.9,778.7 208.5,775.8 209.0,775.8 209.6,778.7 210.1,775.8 210.7,775.8 211.2,775.8 211.8,775.8 212.3,778.7 212.9,775.8 213.4,775.8 214.0,775.8 214.5,775.8 215.1,775.8 215.6,775.8 216.2,775.8 216.7,775.8 217.3,778.7 217.8,778.7 218.4,778.7 218.9,775.8 219.5,775.8 220.0,778.7 220.6,775.8 221.1,775.8 221.7,775.8 222.2,775.8 222.8,775.8 223.3,778.7 223.9,778.7 224.4,775.8 225.0,775.8 225.5,775.8 226.1,778.7 226.6,775.8 227.2,775.8 227.7,778.7 228.3,778.7 228.8,778.7 229.4,778.7 229.9,775.8 230.5,778.7 231.0,778.7 231.6,778.7 232.1,775.8 232.7,778.7 233.2,778.7 233.8,775.8 234.3,775.8 234.9,778.7 235.4,775.8 236.0,781.7 236.5,775.8 237.1,778.7 237.6,781.7 238.2,778.7 238.7,778.7 239.3,775.8 239.8,778.7 240.4,775.8 240.9,775.8 241.5,775.8 242.0,778.7 242.6,775.8 243.1,775.8 243.7,775.8 244.2,778.7 244.8,775.8 245.3,778.7 245.9,778.7 246.4,775.8 247.0,775.8 247.5,775.8 248.1,775.8 248.6,775.8 249.2,775.8 249.7,775.8 250.3,775.8 250.8,775.8 251.4,775.8 251.9,775.8 252.5,775.8 253.0,775.8 253.6,775.8 254.1,775.8 254.7,775.8 255.2,778.7 255.8,775.8 256.3,775.8 256.9,775.8 257.4,778.7 258.0,778.7 258.5,775.8 259.1,778.7 259.6,778.7 260.2,778.7 260.7,775.8 261.3,775.8 261.8,778.7 262.4,775.8 262.9,775.8 263.5,778.7 264.0,775.8 264.6,775.8 265.1,778.7 265.7,775.8 266.2,778.7 266.8,781.7 267.3,775.8 267.9,775.8 268.4,778.7 269.0,778.7 269.5,784.6 270.1,778.7 270.6,778.7 271.2,778.7 271.7,775.8 272.3,778.7 272.8,781.7 273.4,778.7 273.9,778.7 274.5,775.8 275.0,775.8 275.6,778.7 276.1,775.8 276.7,775.8 277.2,775.8 277.8,778.7 278.3,778.7 278.9,778.7 279.4,775.8 280.0,778.7 280.5,778.7 281.1,778.7 281.6,775.8 282.2,775.8 282.7,778.7 283.3,778.7 283.8,775.8 284.4,775.8 284.9,778.7 285.5,778.7 286.0,775.8 286.6,778.7 287.1,778.7 287.7,775.8 288.2,775.8 288.8,775.8 289.3,778.7 289.9,775.8 290.4,778.7 291.0,775.8 291.5,778.7 292.1,778.7 292.6,775.8 293.2,775.8 293.7,778.7 294.3,778.7 294.8,784.6 295.4,778.7 295.9,778.7 296.5,778.7 297.0,778.7 297.6,775.8 298.1,775.8 298.7,775.8 299.2,775.8 299.8,775.8 300.3,778.7 300.9,775.8 301.4,778.7 302.0,784.6 302.5,778.7 303.1,775.8 303.6,775.8 304.2,778.7 304.7,775.8 305.3,775.8 305.8,778.7 306.4,775.8 306.9,775.8 307.5,775.8 308.0,775.8 308.6,775.8 309.1,775.8 309.7,775.8 310.2,778.7 310.8,775.8 311.3,775.8 311.9,775.8 312.4,778.7 313.0,778.7 313.5,778.7 314.1,778.7 314.6,778.7 315.2,775.8 315.7,778.7 316.3,778.7 316.8,778.7 317.4,775.8 317.9,775.8 318.5,775.8 319.0,778.7 319.6,778.7 320.1,778.7 320.7,796.3 321.2,778.7 321.8,775.8 322.3,781.7 322.9,775.8 323.4,781.7 324.0,778.7 324.5,775.8 325.1,778.7 325.6,778.7 326.2,781.7 326.7,778.7 327.3,778.7 327.8,775.8 328.4,778.7 328.9,775.8 329.5,778.7 330.0,775.8 330.6,778.7 331.1,775.8 331.7,775.8 332.2,778.7 332.8,778.7 333.3,775.8 333.9,775.8 334.4,778.7 335.0,775.8 335.5,775.8 336.1,775.8 336.6,775.8 337.2,775.8 337.7,781.7 338.3,778.7 338.8,775.8 339.4,778.7 339.9,775.8 340.5,775.8 341.0,787.5 341.6,778.7 342.1,775.8 342.7,784.6 343.2,775.8 343.8,775.8 344.3,775.8 344.9,778.7 345.4,775.8 346.0,775.8 346.5,775.8 347.1,775.8 347.6,775.8 348.2,778.7 348.7,778.7 349.3,775.8 349.8,775.8 350.4,778.7 350.9,778.7 351.5,778.7 352.0,778.7 352.6,778.7 353.1,778.7 353.7,778.7 354.2,778.7 354.8,778.7 355.3,775.8 355.9,775.8 356.4,778.7 357.0,775.8 357.5,775.8 358.1,775.8 358.6,775.8 359.2,778.7 359.7,775.8 360.3,778.7 360.8,775.8 361.4,784.6 361.9,775.8 362.5,778.7 363.0,775.8 363.6,778.7 364.1,778.7 364.7,775.8 365.2,778.7 365.8,775.8 366.3,778.7 366.9,775.8 367.4,775.8 368.0,775.8 368.5,778.7 369.1,775.8 369.6,775.8 370.2,778.7 370.7,778.7 371.3,775.8 371.8,775.8 372.4,778.7 372.9,775.8 373.5,775.8 374.0,775.8 374.6,775.8 375.1,778.7 375.7,778.7 376.2,775.8 376.8,778.7 377.3,778.7 377.9,775.8 378.4,775.8 379.0,775.8 379.5,778.7 380.1,775.8 380.6,775.8 381.2,778.7 381.7,775.8 382.3,784.6 382.8,775.8 383.4,775.8 383.9,775.8 384.5,775.8 385.0,778.7 385.6,775.8 386.1,775.8 386.7,775.8 387.2,775.8 387.8,778.7 388.3,775.8 388.9,775.8 389.4,775.8 390.0,775.8 390.5,775.8 391.1,775.8 391.6,778.7 392.2,775.8 392.7,781.7 393.3,775.8 393.8,775.8 394.4,778.7 394.9,778.7 395.5,775.8 396.0,778.7 396.6,778.7 397.1,775.8 397.7,775.8 398.2,778.7 398.8,775.8 399.3,823.4 399.9,846.8 400.4,831.9 401.0,844.0 401.5,816.7 402.1,846.7 402.6,811.1 403.2,848.5 403.7,825.7 404.3,854.4 404.8,775.8 405.4,999.6 405.9,778.7 406.5,999.0 407.0,778.7 407.6,1033.4 408.1,778.7 408.7,775.8 409.2,775.8 409.8,775.8 410.3,778.7 410.9,775.8 411.4,775.8 412.0,775.8 412.5,775.8 413.1,775.8 413.6,775.8 414.2,775.8 414.7,778.7 415.3,775.8 415.8,775.8 416.4,775.8 416.9,778.7 417.5,778.7 418.0,775.8 418.6,775.8 419.1,778.7 419.7,778.7 420.2,778.7 420.8,775.8 421.3,778.7 421.9,778.7 422.4,775.8 423.0,778.7 423.5,775.8 424.1,775.8 424.6,775.8 425.2,775.8 425.7,778.7 426.3,775.8 426.8,778.7 427.4,778.7 427.9,778.7 428.5,778.7 429.0,775.8 429.6,775.8 430.1,781.7 430.7,778.7 431.2,775.8 431.8,778.7 432.3,778.7 432.9,775.8 433.4,778.7 434.0,778.7 434.5,775.8 435.1,778.7 435.6,784.6 436.2,775.8 436.7,778.7 437.3,778.7 437.8,775.8 438.4,778.7 438.9,781.7 439.5,851.9 440.0,835.0 440.6,862.9 441.1,824.6 441.7,868.3 442.2,835.7 442.8,852.0 443.3,835.9 443.9,845.8 444.4,827.3 445.0,842.3 445.5,832.4 446.1,852.8 446.6,838.5 447.2,866.6 447.7,834.6 448.3,851.8 448.8,827.6 449.4,873.0 449.9,826.1 450.5,864.5 451.0,832.7 451.6,850.9 452.1,836.6 452.7,859.5 453.2,846.0 453.8,860.8 454.3,825.2 454.9,859.6 455.4,822.1 456.0,848.0 456.5,827.0 457.1,838.2 457.6,821.2 458.2,858.0 458.7,827.4 459.3,863.4 459.8,824.7 460.4,855.9 460.9,818.7 461.5,866.3 462.0,827.3 462.6,854.9 463.1,775.8 463.7,778.7 464.2,778.7 464.8,775.8 465.3,781.7 465.9,775.8 466.4,775.8 467.0,778.7 467.5,775.8 468.1,775.8 468.6,778.7 469.2,778.7 469.7,775.8 470.3,775.8 470.8,781.7 471.4,778.7 471.9,775.8 472.5,775.8 473.0,781.7 473.6,778.7 474.1,775.8 474.7,775.8 475.2,775.8 475.8,778.7 476.3,781.7 476.9,778.7 477.4,778.7 478.0,778.7 478.5,778.7 479.1,778.7 479.6,778.7 480.2,775.8 480.7,846.4 481.3,852.1 481.8,832.1 482.4,851.1 482.9,837.4 483.5,861.8 484.0,833.5 484.6,857.5 485.1,832.3 485.7,865.5 486.2,852.7 486.8,882.8 487.3,861.8 487.9,873.3 488.4,868.9 489.0,871.6 489.5,823.8 490.1,844.5 490.6,828.5 491.2,857.4 491.7,833.3 492.3,858.7 492.8,840.5 493.4,853.3 493.9,834.6 494.5,864.4 495.0,831.7 495.6,859.3 496.1,836.4 496.7,858.0 497.2,778.7 497.8,778.7 498.3,778.7 498.9,778.7 499.4,775.8 500.0,778.7 500.5,778.7 501.1,775.8 501.6,778.7 502.2,778.7 502.7,778.7 503.3,775.8 503.8,778.7 504.4,775.8 504.9,775.8 505.5,778.7 506.0,775.8 506.6,775.8 507.1,775.8 507.7,784.6 508.2,775.8 508.8,778.7 509.3,778.7 509.9,778.7 510.4,778.7 511.0,778.7 511.5,778.7 512.1,778.7 512.6,778.7 513.2,778.7 513.7,781.7 514.3,775.8 514.8,778.7 515.4,778.7 515.9,778.7 516.5,775.8 517.0,775.8 517.6,778.7 518.1,781.7 518.7,778.7 519.2,778.7 519.8,784.6 520.3,775.8 520.9,775.8 521.4,778.7 522.0,778.7 522.5,778.7 523.1,778.7 523.6,775.8 524.2,778.7 524.7,778.7 525.3,775.8 525.8,778.7 526.4,775.8 526.9,778.7 527.5,775.8 528.0,775.8 528.6,775.8 529.1,778.7 529.7,778.7 530.2,775.8 530.8,775.8 531.3,775.8 531.9,775.8 532.4,775.8 533.0,778.7 533.5,775.8 534.1,775.8 534.6,778.7 535.2,784.6 535.7,778.7 536.3,775.8 536.8,778.7 537.4,778.7 537.9,775.8 538.5,778.7 539.0,778.7 539.6,787.5 540.1,778.7 540.7,775.8 541.2,775.8 541.8,775.8 542.3,775.8 542.9,778.7 543.4,778.7 544.0,778.7 544.5,778.7 545.1,778.7 545.6,775.8 546.2,778.7 546.7,775.8 547.3,775.8 547.8,778.7 548.4,781.7 548.9,778.7 549.5,778.7 550.0,778.7 550.6,775.8 551.1,778.7 551.7,775.8 552.2,775.8 552.8,778.7 553.3,778.7 553.9,775.8 554.4,778.7 555.0,778.7 555.5,778.7 556.1,775.8 556.6,775.8 557.2,778.7 557.7,775.8 558.3,775.8 558.8,775.8 559.4,775.8 559.9,775.8 560.5,775.8 561.0,778.7 561.6,778.7 562.1,778.7 562.7,775.8 563.2,775.8 563.8,775.8 564.3,778.7 564.9,775.8 565.4,775.8 566.0,775.8 566.5,778.7 567.1,775.8 567.6,775.8 568.2,778.7 568.7,778.7 569.3,778.7 569.8,778.7 570.4,775.8 570.9,778.7 571.5,775.8 572.0,775.8 572.6,775.8 573.1,781.7 573.7,778.7 574.2,775.8 574.8,775.8 575.3,778.7 575.9,775.8 576.4,778.7 577.0,781.7 577.5,778.7 578.1,775.8 578.6,775.8 579.2,775.8 579.7,775.8 580.3,778.7 580.8,778.7 581.4,775.8 581.9,778.7 582.5,775.8 583.0,778.7 583.6,778.7 584.1,778.7 584.7,775.8 585.2,775.8 585.8,784.6 586.3,775.8 586.9,778.7 587.4,781.7 588.0,778.7 588.5,775.8 589.1,775.8 589.6,778.7 590.2,778.7 590.7,775.8 591.3,775.8 591.8,778.7 592.4,775.8 592.9,781.7 593.5,778.7 594.0,778.7 594.6,778.7 595.1,775.8 595.7,775.8 596.2,775.8 596.8,775.8 597.3,781.7 597.9,778.7 598.4,775.8 599.0,775.8 599.5,778.7 600.1,775.8 600.6,775.8 601.2,775.8 601.7,778.7 602.3,775.8 602.8,775.8 603.4,775.8 603.9,778.7 604.5,775.8 605.0,775.8 605.6,775.8 606.1,775.8 606.7,775.8 607.2,778.7 607.8,775.8 608.3,775.8 608.8,778.7 609.4,784.6 609.9,775.8 610.5,775.8 611.0,775.8 611.6,778.7 612.1,775.8 612.7,775.8 613.2,775.8 613.8,775.8 614.3,775.8 614.9,775.8 615.4,775.8 616.0,787.5 616.5,778.7 617.1,775.8 617.6,778.7 618.2,775.8 618.7,775.8 619.3,778.7 619.8,775.8 620.4,778.7 620.9,778.7 621.5,787.5 622.0,787.5 622.6,781.7 623.1,778.7 623.7,775.8 624.2,781.7 624.8,775.8 625.3,775.8 625.9,778.7 626.4,775.8 627.0,775.8 627.5,778.7 628.1,775.8 628.6,784.6 629.2,778.7 629.7,781.7 630.3,775.8 630.8,778.7 631.4,778.7 631.9,775.8 632.5,775.8 633.0,775.8 633.6,775.8 634.1,775.8 634.7,775.8 635.2,775.8 635.8,775.8 636.3,775.8 636.9,778.7 637.4,778.7 638.0,778.7 638.5,778.7 639.1,778.7 639.6,775.8 640.2,775.8 640.7,778.7 641.3,778.7 641.8,775.8 642.4,778.7 642.9,775.8 643.5,784.6 644.0,778.7 644.6,775.8 645.1,775.8 645.7,775.8 646.2,775.8 646.8,778.7 647.3,778.7 647.9,775.8 648.4,775.8 649.0,778.7 649.5,778.7 650.1,778.7 650.6,775.8 651.2,775.8 651.7,778.7 652.3,778.7 652.8,775.8 653.4,784.6 653.9,778.7 654.5,775.8 655.0,778.7 655.6,775.8 656.1,778.7 656.7,778.7 657.2,778.7 657.8,775.8 658.3,778.7 658.9,781.7 659.4,775.8 660.0,775.8 660.5,775.8 661.1,775.8 661.6,778.7 662.2,778.7 662.7,778.7 663.3,778.7 663.8,775.8 664.4,775.8 664.9,775.8 665.5,775.8 666.0,778.7 666.6,778.7 667.1,778.7 667.7,775.8 668.2,775.8 668.8,775.8 669.3,778.7 669.9,778.7 670.4,775.8 671.0,778.7 671.5,775.8 672.1,778.7 672.6,781.7 673.2,775.8 673.7,775.8 674.3,778.7 674.8,784.6 675.4,775.8 675.9,775.8 676.5,778.7 677.0,775.8 677.6,775.8 678.1,781.7 678.7,775.8 679.2,778.7 679.8,775.8 680.3,778.7 680.9,775.8 681.4,775.8 682.0,775.8 682.5,778.7 683.1,775.8 683.6,775.8 684.2,778.7 684.7,775.8 685.3,778.7 685.8,778.7 686.4,775.8 686.9,778.7 687.5,775.8 688.0,778.7 688.6,778.7 689.1,778.7 689.7,778.7 690.2,775.8 690.8,778.7 691.3,775.8 691.9,784.6 692.4,778.7 693.0,775.8 693.5,778.7 694.1,778.7 694.6,778.7 695.2,775.8 695.7,775.8 696.3,775.8 696.8,778.7 697.4,781.7 697.9,775.8 698.5,778.7 699.0,778.7 699.6,775.8 700.1,775.8 700.7,775.8 701.2,775.8 701.8,778.7 702.3,775.8 702.9,775.8 703.4,775.8 704.0,778.7 704.5,796.3 705.1,775.8 705.6,781.7 706.2,775.8 706.7,775.8 707.3,778.7 707.8,778.7 708.4,778.7 708.9,775.8 709.5,778.7 710.0,787.5 710.6,778.7 711.1,775.8 711.7,775.8 712.2,775.8 712.8,775.8 713.3,778.7 713.9,775.8 714.4,787.5 715.0,775.8 715.5,775.8 716.1,775.8 716.6,778.7 717.2,775.8 717.7,778.7 718.3,775.8 718.8,775.8 719.4,778.7 719.9,775.8 720.5,775.8 721.0,775.8 721.6,778.7 722.1,775.8 722.7,775.8 723.2,775.8 723.8,775.8 724.3,778.7 724.9,775.8 725.4,775.8 726.0,778.7 726.5,775.8 727.1,778.7 727.6,775.8 728.2,775.8 728.7,778.7 729.3,778.7 729.8,778.7 730.4,781.7 730.9,775.8 731.5,778.7 732.0,775.8 732.6,778.7 733.1,778.7 733.7,778.7 734.2,778.7 734.8,775.8 735.3,775.8 735.9,775.8 736.4,778.7 737.0,778.7 737.5,778.7 738.1,775.8 738.6,775.8 739.2,775.8 739.7,778.7 740.3,775.8 740.8,778.7 741.4,778.7 741.9,778.7 742.5,778.7 743.0,778.7 743.6,775.8 744.1,784.6 744.7,775.8 745.2,775.8 745.8,775.8 746.3,784.6 746.9,784.6 747.4,790.4 748.0,775.8 748.5,775.8 749.1,778.7 749.6,778.7 750.2,775.8 750.7,787.5 751.3,778.7 751.8,775.8 752.4,775.8 752.9,778.7 753.5,775.8 754.0,778.7 754.6,775.8 755.1,778.7 755.7,778.7 756.2,775.8 756.8,775.8 757.3,778.7 757.9,778.7 758.4,778.7 759.0,775.8 759.5,775.8 760.1,775.8 760.6,775.8 761.2,775.8 761.7,775.8 762.3,775.8 762.8,787.5 763.4,775.8 763.9,784.6 764.5,778.7 765.0,775.8 765.6,775.8 766.1,775.8 766.7,778.7 767.2,775.8 767.8,775.8 768.3,778.7 768.9,778.7 769.4,775.8 770.0,775.8 770.5,778.7 771.1,778.7 771.6,775.8 772.2,775.8 772.7,775.8 773.3,778.7 773.8,778.7 774.4,778.7 774.9,778.7 775.5,775.8 776.0,778.7 776.6,775.8 777.1,778.7 777.7,775.8 778.2,775.8 778.8,778.7 779.3,775.8 779.9,778.7 780.4,778.7 781.0,778.7 781.5,775.8 782.1,775.8 782.6,775.8 783.2,778.7 783.7,778.7 784.3,778.7 784.8,775.8 785.4,775.8 785.9,781.7 786.5,778.7 787.0,778.7 787.6,781.7 788.1,775.8 788.7,775.8 789.2,778.7 789.8,775.8 790.3,775.8 790.9,781.7 791.4,778.7 792.0,775.8 792.5,778.7 793.1,775.8 793.6,778.7 794.2,775.8 794.7,781.7 795.3,775.8 795.8,781.7 796.4,778.7 796.9,775.8 797.5,778.7 798.0,778.7 798.6,775.8 799.1,775.8 799.7,775.8 800.2,775.8 800.8,775.8 801.3,778.7 801.9,778.7 802.4,775.8 803.0,781.7 803.5,775.8 804.1,778.7 804.6,778.7 805.2,778.7 805.7,775.8 806.3,778.7 806.8,778.7 807.4,775.8 807.9,778.7 808.5,778.7 809.0,778.7 809.6,775.8 810.1,775.8 810.7,775.8 811.2,778.7 811.8,778.7 812.3,775.8 812.9,778.7 813.4,775.8 814.0,775.8 814.5,778.7 815.1,775.8 815.6,778.7 816.2,778.7 816.7,778.7 817.3,778.7 817.8,778.7 818.4,775.8 818.9,775.8 819.5,775.8 820.0,778.7 820.6,778.7 821.1,778.7 821.7,775.8 822.2,775.8 822.8,778.7 823.3,778.7 823.9,778.7 824.4,778.7 825.0,778.7 825.5,778.7 826.1,778.7 826.6,775.8 827.2,778.7 827.7,775.8 828.3,778.7 828.8,775.8 829.4,778.7 829.9,778.7 830.5,778.7 831.0,775.8 831.6,778.7 832.1,775.8 832.7,778.7 833.2,846.7 833.8,822.4 834.3,866.2 834.9,824.2 835.4,849.4 836.0,833.9 836.5,858.9 837.1,844.7 837.6,863.7 838.2,843.3 838.7,870.8 839.3,849.7 839.8,868.7 840.4,842.5 840.9,775.8 841.5,775.8 842.0,775.8 842.6,775.8 843.1,775.8 843.7,775.8 844.2,775.8 844.8,778.7 845.3,775.8 845.9,778.7 846.4,775.8 847.0,775.8 847.5,775.8 848.1,775.8 848.6,775.8 849.2,778.7 849.7,778.7 850.3,778.7 850.8,775.8 851.4,778.7 851.9,778.7 852.5,778.7 853.0,778.7 853.6,778.7 854.1,775.8 854.7,778.7 855.2,778.7 855.8,775.8 856.3,778.7 856.9,778.7 857.4,778.7 858.0,778.7 858.5,778.7 859.1,778.7 859.6,778.7 860.2,775.8 860.7,778.7 861.3,775.8 861.8,775.8 862.4,778.7 862.9,775.8 863.5,775.8 864.0,775.8 864.6,775.8 865.1,775.8 865.7,775.8 866.2,778.7 866.8,775.8 867.3,775.8 867.9,775.8 868.4,778.7 869.0,778.7 869.5,778.7 870.1,775.8 870.6,775.8 871.2,778.7 871.7,775.8 872.3,775.8 872.8,775.8 873.4,775.8 873.9,775.8 874.5,775.8 875.0,775.8 875.6,775.8 876.1,775.8 876.7,784.6 877.2,775.8 877.8,778.7 878.3,775.8 878.9,781.7 879.4,778.7 880.0,775.8 880.5,775.8 881.1,778.7 881.6,778.7 882.2,775.8 882.7,775.8 883.3,775.8 883.8,775.8 884.4,775.8 884.9,778.7 885.5,775.8 886.0,775.8 886.6,778.7 887.1,787.5 887.7,778.7 888.2,775.8 888.8,775.8 889.3,775.8 889.9,775.8 890.4,775.8 891.0,775.8 891.5,781.7 892.1,775.8 892.6,775.8 893.2,778.7 893.7,775.8 894.3,775.8 894.8,778.7 895.4,775.8 895.9,778.7 896.5,775.8 897.0,778.7 897.6,775.8 898.1,778.7 898.7,775.8 899.2,778.7 899.8,775.8 900.3,775.8 900.9,778.7 901.4,778.7 902.0,778.7 902.5,775.8 903.1,775.8 903.6,775.8 904.2,775.8 904.7,778.7 905.3,775.8 905.8,778.7 906.4,778.7 906.9,775.8 907.5,778.7 908.0,778.7 908.6,775.8 909.1,781.7 909.7,778.7 910.2,775.8 910.8,778.7 911.3,775.8 911.9,775.8 912.4,775.8 913.0,778.7 913.5,775.8 914.1,775.8 914.6,781.7 915.2,775.8 915.7,775.8 916.3,775.8 916.8,778.7 917.4,775.8 917.9,775.8 918.5,778.7 919.0,778.7 919.6,781.7 920.1,775.8 920.7,775.8 921.2,778.7 921.8,778.7 922.3,775.8 922.9,781.7 923.4,778.7 924.0,778.7 924.5,775.8 925.1,778.7 925.6,778.7 926.2,775.8 926.7,778.7 927.3,775.8 927.8,775.8 928.4,775.8 928.9,775.8 929.5,778.7 930.0,775.8 930.6,778.7 931.1,778.7 931.7,778.7 932.2,775.8 932.8,775.8 933.3,775.8 933.9,775.8 934.4,778.7 935.0,778.7 935.5,775.8 936.1,778.7 936.6,778.7 937.2,775.8 937.7,778.7 938.3,775.8 938.8,775.8 939.4,778.7 939.9,778.7 940.5,778.7 941.0,778.7 941.6,829.4 942.1,847.8 942.7,839.0 943.2,850.6 943.8,823.6 944.3,856.0 944.9,827.2 945.4,859.0 946.0,850.3 946.5,860.2 947.1,835.8 947.6,851.9 948.2,816.1 948.7,835.2 949.3,821.6 949.8,858.4 950.4,818.3 950.9,861.7 951.5,821.3 952.0,846.7 952.6,825.9 953.1,854.7 953.7,838.4 954.2,866.9 954.8,846.2 955.3,863.2 955.9,847.2 956.4,856.8 957.0,847.9 957.5,778.7 958.1,778.7 958.6,778.7 959.2,781.7 959.7,778.7 960.3,775.8 960.8,775.8 961.4,778.7 961.9,778.7 962.5,778.7 963.0,775.8 963.6,778.7 964.1,778.7 964.7,778.7 965.2,778.7 965.8,778.7 966.3,778.7 966.9,784.6 967.4,775.8 968.0,778.7 968.5,778.7 969.1,781.7 969.6,775.8 970.2,775.8 970.7,775.8 971.3,775.8 971.8,775.8 972.4,778.7 972.9,778.7 973.5,778.7 974.0,778.7 974.6,778.7 975.1,778.7 975.7,775.8 976.2,778.7 976.8,778.7 977.3,775.8 977.9,775.8 978.4,775.8 979.0,775.8 979.5,775.8 980.1,775.8 980.6,778.7 981.2,778.7 981.7,778.7 982.3,778.7 982.8,778.7 983.4,778.7 983.9,790.4 984.5,778.7 985.0,778.7 985.6,775.8 986.1,778.7 986.7,775.8 987.2,778.7 987.8,778.7 988.3,775.8 988.9,781.7 989.4,775.8 990.0,778.7 990.5,778.7 991.1,778.7 991.6,778.7 992.2,775.8 992.7,775.8 993.3,775.8 993.8,778.7 994.4,778.7 994.9,778.7 995.5,775.8 996.0,778.7 996.6,778.7 997.1,778.7 997.7,775.8 998.2,775.8 998.8,775.8 999.3,775.8 999.9,778.7 1000.4,778.7 1001.0,775.8 1001.5,778.7 1002.1,775.8 1002.6,778.7 1003.2,778.7 1003.7,778.7 1004.3,778.7 1004.8,781.7 1005.4,778.7 1005.9,778.7 1006.5,778.7 1007.0,778.7 1007.6,775.8 1008.1,824.0 1008.7,805.8 1009.2,815.0 1009.8,816.2 1010.3,819.7 1010.9,814.5 1011.4,778.7 1012.0,778.7 1012.5,778.7 1013.1,778.7 1013.6,778.7 1014.2,778.7 1014.7,775.8 1015.3,778.7 1015.8,778.7 1016.4,775.8 1016.9,784.6 1017.5,775.8 1018.0,778.7 1018.6,775.8 1019.1,775.8 1019.7,775.8 1020.2,778.7 1020.8,775.8 1021.3,775.8 1021.9,775.8 1022.4,775.8 1023.0,778.7 1023.5,775.8 1024.1,775.8 1024.6,781.7 1025.2,775.8 1025.7,778.7 1026.3,775.8 1026.8,784.6 1027.4,775.8 1027.9,775.8 1028.5,775.8 1029.0,775.8 1029.6,778.7 1030.1,775.8 1030.7,778.7 1031.2,775.8 1031.8,775.8 1032.3,778.7 1032.9,775.8 1033.4,775.8 1034.0,775.8 1034.5,775.8 1035.1,781.7 1035.6,775.8 1036.2,778.7 1036.7,778.7 1037.3,775.8 1037.8,781.7 1038.4,775.8 1038.9,778.7 1039.5,775.8 1040.0,775.8 1040.6,775.8 1041.1,778.7 1041.7,778.7 1042.2,778.7 1042.8,778.7 1043.3,775.8 1043.9,778.7 1044.4,775.8 1045.0,775.8 1045.5,775.8 1046.1,775.8 1046.6,775.8 1047.2,778.7 1047.7,778.7 1048.3,778.7 1048.8,775.8 1049.4,775.8 1049.9,784.6 1050.5,775.8 1051.0,775.8 1051.6,775.8 1052.1,778.7 1052.7,775.8 1053.2,775.8 1053.8,778.7 1054.3,778.7 1054.9,775.8 1055.4,775.8 1056.0,775.8 1056.5,778.7 1057.1,778.7 1057.6,778.7 1058.2,778.7 1058.7,778.7 1059.3,784.6 1059.8,778.7 1060.4,778.7 1060.9,775.8 1061.5,778.7 1062.0,775.8 1062.6,775.8 1063.1,775.8 1063.7,778.7 1064.2,775.8 1064.8,778.7 1065.3,778.7 1065.9,775.8 1066.4,775.8 1067.0,778.7 1067.5,778.7 1068.1,775.8 1068.6,775.8 1069.2,778.7 1069.7,778.7 1070.3,778.7 1070.8,775.8 1071.4,778.7 1071.9,775.8 1072.5,775.8 1073.0,778.7 1073.6,775.8 1074.1,778.7 1074.7,775.8 1075.2,775.8 1075.8,778.7 1076.3,778.7 1076.9,778.7 1077.4,775.8 1078.0,775.8 1078.5,775.8 1079.1,775.8 1079.6,781.7 1080.2,778.7 1080.7,778.7 1081.3,775.8 1081.8,778.7 1082.4,778.7 1082.9,775.8 1083.5,778.7 1084.0,775.8 1084.6,778.7 1085.1,775.8 1085.7,775.8 1086.2,778.7 1086.8,778.7 1087.3,775.8 1087.9,784.6 1088.4,778.7 1089.0,778.7 1089.5,775.8 1090.1,775.8 1090.6,778.7 1091.2,781.7 1091.7,778.7 1092.3,775.8 1092.8,775.8 1093.4,778.7 1093.9,778.7 1094.5,775.8 1095.0,775.8 1095.6,775.8 1096.1,775.8 1096.7,781.7 1097.2,775.8 1097.8,778.7 1098.3,775.8 1098.9,784.6 1099.4,775.8 1100.0,775.8 1100.5,775.8 1101.1,775.8 1101.6,775.8 1102.2,775.8 1102.7,775.8 1103.3,775.8 1103.8,778.7 1104.4,781.7 1104.9,775.8 1105.5,778.7 1106.0,778.7 1106.6,781.7 1107.1,778.7 1107.7,775.8 1108.2,775.8 1108.8,778.7 1109.3,775.8 1109.9,775.8 1110.4,775.8 1111.0,778.7 1111.5,778.7 1112.1,778.7 1112.6,775.8 1113.2,778.7 1113.7,775.8 1114.3,775.8 1114.8,787.5 1115.4,778.7 1115.9,778.7 1116.5,778.7 1117.0,778.7 1117.6,781.7 1118.1,778.7 1118.7,775.8 1119.2,775.8 1119.8,775.8 1120.3,775.8 1120.9,775.8 1121.4,778.7 1122.0,778.7 1122.5,778.7 1123.1,778.7 1123.6,775.8 1124.2,775.8 1124.7,778.7 1125.3,775.8 1125.8,775.8 1126.4,775.8 1126.9,778.7 1127.5,775.8 1128.0,775.8 1128.6,775.8 1129.1,781.7 1129.7,778.7 1130.2,775.8 1130.8,781.7 1131.3,790.4 1131.9,775.8 1132.4,775.8 1133.0,778.7 1133.5,778.7 1134.1,778.7 1134.6,775.8 1135.2,775.8 1135.7,775.8 1136.3,775.8 1136.8,781.7 1137.4,775.8 1137.9,775.8 1138.5,775.8 1139.0,775.8 1139.6,775.8 1140.1,778.7 1140.7,781.7 1141.2,778.7 1141.8,775.8 1142.3,775.8 1142.9,775.8 1143.4,775.8 1144.0,775.8 1144.5,781.7 1145.1,775.8 1145.6,778.7 1146.2,775.8 1146.7,775.8 1147.3,775.8 1147.8,778.7 1148.4,778.7 1148.9,775.8 1149.5,775.8 1150.0,879.8 1150.6,861.0 1151.1,871.3 1151.7,854.9 1152.2,881.6 1152.8,841.4 1153.3,887.5 1153.9,775.8 1154.4,778.7 1155.0,775.8 1155.5,781.7 1156.1,775.8 1156.6,775.8 1157.2,778.7 1157.7,775.8 1158.3,775.8 1158.8,781.7 1159.4,775.8 1159.9,775.8 1160.5,775.8 1161.0,775.8 1161.6,775.8 1162.1,775.8 1162.7,775.8 1163.2,775.8 1163.8,778.7 1164.3,778.7 1164.9,781.7 1165.4,775.8 1166.0,775.8 1166.5,775.8 1167.1,775.8 1167.6,781.7 1168.2,778.7 1168.7,775.8 1169.3,784.6 1169.8,775.8 1170.4,778.7 1170.9,778.7 1171.5,778.7 1172.0,778.7 1172.6,775.8 1173.1,778.7 1173.7,778.7 1174.2,775.8 1174.8,775.8 1175.3,775.8 1175.9,778.7 1176.4,778.7 1177.0,775.8 1177.5,778.7 1178.1,775.8 1178.6,778.7 1179.2,778.7 1179.7,775.8 1180.3,778.7 1180.8,781.7 1181.4,775.8 1181.9,775.8 1182.5,775.8 1183.0,778.7 1183.6,778.7 1184.1,778.7 1184.7,775.8 1185.2,778.7 1185.8,775.8 1186.3,775.8 1186.9,778.7 1187.4,778.7 1188.0,778.7 1188.5,775.8 1189.1,778.7 1189.6,775.8 1190.2,778.7 1190.7,778.7 1191.3,775.8 1191.8,778.7 1192.4,775.8 1192.9,781.7 1193.5,775.8 1194.0,775.8 1194.6,778.7 1195.1,778.7 1195.7,778.7 1196.2,775.8 1196.8,775.8 1197.3,775.8 1197.9,781.7 1198.4,778.7 1199.0,775.8 1199.5,775.8 1200.1,778.7 1200.6,778.7 1201.2,778.7 1201.7,775.8 1202.3,778.7 1202.8,778.7 1203.4,778.7 1203.9,775.8 1204.5,778.7 1205.0,787.5 1205.6,775.8 1206.1,781.7 1206.7,775.8 1207.2,775.8 1207.8,775.8 1208.3,778.7 1208.9,775.8 1209.4,775.8 1210.0,775.8 1210.5,775.8 1211.1,781.7 1211.6,778.7 1212.2,775.8 1212.7,778.7 1213.3,775.8 1213.8,775.8 1214.4,787.5 1214.9,775.8 1215.5,775.8 1216.0,781.7 1216.6,787.5 1217.1,775.8 1217.7,778.7 1218.2,778.7 1218.8,775.8 1219.3,775.8 1219.9,775.8 1220.4,775.8 1221.0,775.8 1221.5,778.7 1222.1,775.8 1222.6,775.8 1223.2,775.8 1223.7,775.8 1224.3,778.7 1224.8,775.8 1225.4,775.8 1225.9,775.8 1226.5,778.7 1227.0,778.7 1227.6,775.8 1228.1,775.8 1228.7,778.7 1229.2,775.8 1229.8,775.8 1230.3,778.7 1230.9,775.8 1231.4,778.7 1232.0,778.7 1232.5,775.8 1233.1,781.7 1233.6,775.8 1234.2,778.7 1234.7,775.8 1235.3,775.8 1235.8,781.7 1236.4,775.8 1236.9,775.8 1237.5,775.8 1238.0,775.8 1238.6,775.8 1239.1,775.8 1239.7,775.8 1240.2,775.8 1240.8,778.7 1241.3,778.7 1241.9,775.8 1242.4,775.8 1243.0,775.8 1243.5,775.8 1244.1,775.8 1244.6,775.8 1245.2,778.7 1245.7,775.8 1246.3,778.7 1246.8,775.8 1247.4,775.8 1247.9,775.8 1248.5,778.7 1249.0,778.7 1249.6,775.8 1250.1,775.8 1250.7,778.7 1251.2,778.7 1251.8,781.7 1252.3,775.8 1252.9,775.8 1253.4,775.8 1254.0,775.8 1254.5,775.8 1255.1,778.7 1255.6,778.7 1256.2,775.8 1256.7,775.8 1257.3,775.8 1257.8,778.7 1258.4,778.7 1258.9,778.7 1259.5,781.7 1260.0,775.8 1260.6,778.7 1261.1,775.8 1261.7,778.7 1262.2,778.7 1262.8,778.7 1263.3,778.7 1263.9,778.7 1264.4,778.7 1265.0,775.8 1265.5,775.8 1266.1,775.8 1266.6,778.7 1267.2,778.7 1267.7,775.8 1268.3,778.7 1268.8,778.7 1269.4,778.7 1269.9,775.8 1270.5,778.7 1271.0,775.8 1271.6,775.8 1272.1,775.8 1272.7,778.7 1273.2,775.8 1273.8,775.8 1274.3,778.7 1274.9,775.8 1275.4,775.8 1276.0,775.8 1276.5,775.8 1277.1,775.8 1277.6,775.8 1278.2,778.7 1278.7,778.7 1279.3,775.8 1279.8,778.7 1280.4,775.8 1280.9,775.8 1281.5,778.7 1282.0,778.7 1282.6,778.7 1283.1,781.7 1283.7,775.8 1284.2,778.7 1284.8,778.7 1285.3,778.7 1285.9,775.8 1286.4,775.8 1287.0,778.7 1287.5,775.8 1288.1,775.8 1288.6,778.7 1289.2,775.8 1289.7,775.8 1290.3,778.7 1290.8,778.7 1291.4,775.8 1291.9,775.8 1292.5,790.4 1293.0,778.7 1293.6,775.8 1294.1,775.8 1294.7,778.7 1295.2,778.7 1295.8,775.8 1296.3,775.8 1296.9,775.8 1297.4,778.7 1298.0,775.8 1298.5,778.7 1299.1,775.8 1299.6,778.7 1300.2,778.7 1300.7,778.7 1301.3,778.7 1301.8,775.8 1302.4,775.8 1302.9,778.7 1303.5,775.8 1304.0,778.7 1304.6,778.7 1305.1,775.8 1305.7,775.8 1306.2,778.7 1306.8,778.7 1307.3,775.8 1307.9,778.7 1308.4,775.8 1309.0,775.8 1309.5,775.8 1310.1,775.8 1310.6,775.8 1311.2,775.8 1311.7,775.8 1312.3,775.8 1312.8,778.7 1313.4,775.8 1313.9,778.7 1314.5,775.8 1315.0,775.8 1315.6,775.8 1316.1,778.7 1316.7,775.8 1317.2,775.8 1317.8,775.8 1318.3,775.8 1318.9,778.7 1319.4,778.7 1320.0,778.7 1320.5,775.8 1321.1,778.7 1321.6,778.7 1322.2,775.8 1322.7,775.8 1323.3,778.7 1323.8,775.8 1324.4,778.7 1324.9,775.8 1325.5,778.7 1326.0,775.8 1326.6,775.8 1327.1,778.7 1327.7,775.8 1328.2,775.8 1328.8,781.7 1329.3,775.8 1329.9,775.8 1330.4,778.7 1331.0,775.8 1331.5,775.8 1332.1,775.8 1332.6,775.8 1333.2,775.8 1333.7,778.7 1334.3,775.8 1334.8,793.3 1335.4,778.7 1335.9,775.8 1336.5,775.8 1337.0,778.7 1337.6,778.7 1338.1,778.7 1338.7,775.8 1339.2,778.7 1339.8,775.8 1340.3,778.7 1340.9,778.7 1341.4,778.7 1342.0,775.8 1342.5,778.7 1343.1,778.7 1343.6,775.8 1344.2,775.8 1344.7,775.8 1345.3,775.8 1345.8,778.7 1346.4,778.7 1346.9,775.8 1347.5,775.8 1348.0,778.7 1348.6,778.7 1349.1,778.7 1349.7,778.7 1350.2,778.7 1350.8,778.7 1351.3,775.8 1351.9,778.7 1352.4,775.8 1353.0,775.8 1353.5,778.7 1354.1,775.8 1354.6,778.7 1355.2,775.8 1355.7,778.7 1356.3,775.8 1356.8,775.8 1357.4,778.7 1357.9,775.8 1358.5,775.8 1359.0,775.8 1359.6,775.8 1360.1,778.7 1360.7,775.8 1361.2,775.8 1361.8,775.8 1362.3,784.6 1362.9,778.7 1363.4,781.7 1364.0,778.7 1364.5,778.7 1365.1,781.7 1365.6,775.8 1366.2,778.7 1366.7,778.7 1367.3,775.8 1367.8,775.8 1368.4,775.8 1368.9,775.8 1369.5,775.8 1370.0,775.8 1370.6,775.8 1371.1,775.8 1371.7,778.7 1372.2,778.7 1372.8,781.7 1373.3,775.8 1373.9,778.7 1374.4,778.7 1375.0,781.7 1375.5,778.7 1376.1,775.8 1376.6,778.7 1377.2,775.8 1377.7,778.7 1378.3,775.8 1378.8,778.7 1379.4,778.7 1379.9,778.7 1380.5,778.7 1381.0,775.8 1381.6,775.8 1382.1,775.8 1382.7,778.7 1383.2,775.8 1383.8,778.7 1384.3,775.8 1384.9,775.8 1385.4,778.7 1386.0,775.8 1386.5,778.7 1387.1,775.8 1387.6,775.8 1388.2,775.8 1388.7,775.8 1389.3,778.7 1389.8,775.8 1390.4,775.8 1390.9,778.7 1391.5,775.8 1392.0,778.7 1392.6,775.8 1393.1,775.8 1393.7,775.8 1394.2,778.7 1394.8,775.8 1395.3,775.8 1395.9,778.7 1396.4,775.8 1397.0,778.7 1397.5,775.8 1398.1,781.7 1398.6,775.8 1399.2,775.8 1399.7,781.7 1400.3,778.7 1400.8,775.8 1401.4,775.8 1401.9,775.8 1402.5,775.8 1403.0,775.8 1403.6,778.7 1404.1,778.7 1404.7,775.8 1405.2,775.8 1405.8,775.8 1406.3,775.8 1406.9,775.8 1407.4,775.8 1408.0,778.7 1408.5,775.8 1409.1,775.8 1409.6,775.8 1410.2,778.7 1410.7,778.7 1411.3,781.7 1411.8,778.7 1412.4,775.8 1412.9,778.7 1413.5,778.7 1414.0,778.7 1414.6,778.7 1415.1,775.8 1415.7,775.8 1416.2,778.7 1416.8,778.7 1417.3,775.8 1417.9,775.8 1418.4,778.7 1419.0,775.8 1419.5,778.7 1420.1,778.7 1420.6,778.7 1421.2,778.7 1421.7,778.7 1422.3,778.7 1422.8,778.7 1423.4,778.7 1423.9,781.7 1424.5,778.7 1425.0,775.8 1425.6,781.7 1426.1,775.8 1426.7,778.7 1427.2,775.8 1427.8,778.7 1428.3,775.8 1428.9,775.8 1429.4,778.7 1430.0,775.8 1430.5,775.8 1431.1,775.8 1431.6,775.8 1432.2,778.7 1432.7,775.8 1433.3,775.8 1433.8,775.8 1434.4,781.7 1434.9,775.8 1435.5,775.8 1436.0,775.8 1436.6,775.8 1437.1,775.8 1437.7,775.8 1438.2,778.7 1438.8,775.8 1439.3,775.8 1439.9,781.7 1440.4,775.8 1441.0,778.7 1441.5,778.7 1442.1,775.8 1442.6,781.7 1443.2,775.8 1443.7,775.8 1444.3,775.8 1444.8,775.8 1445.4,778.7 1445.9,775.8 1446.5,775.8 1447.0,775.8 1447.6,775.8 1448.1,775.8 1448.7,775.8 1449.2,778.7 1449.8,778.7 1450.3,778.7 1450.9,775.8 1451.4,775.8 1452.0,775.8 1452.5,778.7 1453.1,778.7 1453.6,775.8 1454.2,778.7 1454.7,775.8 1455.3,775.8 1455.8,778.7 1456.4,778.7 1456.9,778.7 1457.5,775.8 1458.0,778.7 1458.6,778.7 1459.1,775.8 1459.7,778.7 1460.2,778.7 1460.8,775.8 1461.3,781.7 1461.9,778.7 1462.4,775.8 1463.0,778.7 1463.5,775.8 1464.1,775.8 1464.6,775.8 1465.2,775.8 1465.7,778.7 1466.3,778.7 1466.8,784.6 1467.4,778.7 1467.9,775.8 1468.5,778.7 1469.0,778.7 1469.6,778.7 1470.1,778.7 1470.7,775.8 1471.2,775.8 1471.8,781.7 1472.3,778.7 1472.9,775.8 1473.4,775.8 1474.0,775.8 1474.5,775.8 1475.1,787.5 1475.6,778.7 1476.2,778.7 1476.7,775.8 1477.3,775.8 1477.8,775.8 1478.4,775.8 1478.9,775.8 1479.5,775.8 1480.0,775.8 1480.6,778.7 1481.1,775.8 1481.7,775.8 1482.2,778.7 1482.8,775.8 1483.3,775.8 1483.9,775.8 1484.4,775.8 1485.0,778.7 1485.5,775.8 1486.1,778.7 1486.6,775.8 1487.2,775.8 1487.7,775.8 1488.3,775.8 1488.8,775.8 1489.4,775.8 1489.9,775.8 1490.5,778.7 1491.0,775.8 1491.6,775.8 1492.1,778.7 1492.7,775.8 1493.2,778.7 1493.8,775.8 1494.3,778.7 1494.9,775.8 1495.4,775.8 1496.0,775.8 1496.5,775.8 1497.1,775.8 1497.6,778.7 1498.2,778.7 1498.7,775.8 1499.3,778.7 1499.8,775.8 1500.4,778.7 1500.9,778.7 1501.5,778.7 1502.0,775.8 1502.6,775.8 1503.1,778.7 1503.7,775.8 1504.2,778.7 1504.8,775.8 1505.3,775.8 1505.9,778.7 1506.4,778.7 1507.0,775.8 1507.5,778.7 1508.1,775.8 1508.6,778.7 1509.2,775.8 1509.7,781.7 1510.3,775.8 1510.8,778.7 1511.4,775.8 1511.9,784.6 1512.5,775.8 1513.0,778.7 1513.6,775.8 1514.1,775.8 1514.7,775.8 1515.2,778.7 1515.8,775.8 1516.3,775.8 1516.9,778.7 1517.4,775.8 1518.0,778.7 1518.5,775.8 1519.1,775.8 1519.6,775.8 1520.2,775.8 1520.7,775.8 1521.3,778.7 1521.8,775.8 1522.4,775.8 1522.9,775.8 1523.5,775.8 1524.0,775.8 1524.6,775.8 1525.1,775.8 1525.7,775.8 1526.2,775.8 1526.8,778.7 1527.3,775.8 1527.9,775.8 1528.4,775.8 1529.0,775.8 1529.5,778.7 1530.1,778.7 1530.6,784.6 1531.2,775.8 1531.7,775.8 1532.3,778.7 1532.8,778.7 1533.4,781.7 1533.9,775.8 1534.5,778.7 1535.0,775.8 1535.6,775.8 1536.1,778.7 1536.7,778.7 1537.2,778.7 1537.8,778.7 1538.3,775.8 1538.9,778.7 1539.4,775.8 1540.0,778.7 1540.5,778.7 1541.1,778.7 1541.6,778.7 1542.2,778.7 1542.7,775.8 1543.3,781.7 1543.8,778.7 1544.4,778.7 1544.9,778.7 1545.5,775.8 1546.0,778.7 1546.6,775.8 1547.1,778.7 1547.7,778.7 1548.2,775.8 1548.8,778.7 1549.3,778.7 1549.9,775.8 1550.4,778.7 1551.0,775.8 1551.5,775.8 1552.1,775.8 1552.6,778.7 1553.2,778.7 1553.7,775.8 1554.3,778.7 1554.8,775.8 1555.4,775.8 1555.9,778.7 1556.5,775.8 1557.0,775.8 1557.6,775.8 1558.1,775.8 1558.7,778.7 1559.2,775.8 1559.8,778.7 1560.3,778.7 1560.9,778.7 1561.4,775.8 1562.0,775.8 1562.5,775.8 1563.1,778.7 1563.6,775.8 1564.2,775.8 1564.7,775.8 1565.3,775.8 1565.8,775.8 1566.4,778.7 1566.9,775.8 1567.5,778.7 1568.0,781.7 1568.6,778.7 1569.1,775.8 1569.7,778.7 1570.2,775.8 1570.8,778.7 1571.3,775.8 1571.9,778.7 1572.4,775.8 1573.0,775.8 1573.5,775.8 1574.1,778.7 1574.6,778.7 1575.2,775.8 1575.7,775.8 1576.3,778.7 1576.8,775.8 1577.4,775.8 1577.9,775.8 1578.5,778.7 1579.0,775.8 1579.6,775.8 1580.1,775.8 1580.7,778.7 1581.2,778.7 1581.8,778.7 1582.3,778.7 1582.9,778.7 1583.4,775.8 1584.0,775.8 1584.5,778.7 1585.1,778.7 1585.6,778.7 1586.2,778.7 1586.7,778.7 1587.3,778.7 1587.8,775.8 1588.4,775.8 1588.9,775.8 1589.5,778.7 1590.0,778.7 1590.6,775.8 1591.1,775.8 1591.7,775.8 1592.2,784.6 1592.8,775.8 1593.3,775.8 1593.9,775.8 1594.4,778.7 1595.0,775.8 1595.5,775.8 1596.1,778.7 1596.6,775.8 1597.2,775.8 1597.7,775.8 1598.3,778.7 1598.8,775.8 1599.4,775.8 1599.9,775.8 1600.5,775.8 1601.0,775.8 1601.6,775.8 1602.1,775.8 1602.7,775.8 1603.2,775.8 1603.8,775.8 1604.3,775.8 1604.9,775.8 1605.4,775.8 1606.0,775.8 1606.5,778.7 1607.1,775.8 1607.6,775.8 1608.2,778.7 1608.7,775.8 1609.3,778.7 1609.8,778.7 1610.4,775.8 1610.9,778.7 1611.5,775.8 1612.0,775.8 1612.6,775.8 1613.1,775.8 1613.7,775.8 1614.2,775.8 1614.8,775.8 1615.3,775.8 1615.9,775.8 1616.4,775.8 1617.0,778.7 1617.5,775.8 1618.1,775.8 1618.6,778.7 1619.2,775.8 1619.7,775.8 1620.3,775.8 1620.8,778.7 1621.4,775.8 1621.9,778.7 1622.5,778.7 1623.0,775.8 1623.6,775.8 1624.1,775.8 1624.7,775.8 1625.2,778.7 1625.8,778.7 1626.3,778.7 1626.9,775.8 1627.4,775.8 1628.0,778.7 1628.5,778.7 1629.1,775.8 1629.6,775.8 1630.2,775.8 1630.7,775.8 1631.3,778.7 1631.8,775.8 1632.4,778.7 1632.9,775.8 1633.5,778.7 1634.0,778.7 1634.6,775.8 1635.1,775.8 1635.7,778.7 1636.2,775.8 1636.8,775.8 1637.3,775.8 1637.9,775.8 1638.4,775.8 1639.0,775.8 1639.5,775.8 1640.1,775.8 1640.6,778.7 1641.2,778.7 1641.7,778.7 1642.3,778.7 1642.8,778.7 1643.4,775.8 1643.9,778.7 1644.5,775.8 1645.0,778.7 1645.6,778.7 1646.1,778.7 1646.7,781.7 1647.2,775.8 1647.8,778.7 1648.3,778.7 1648.9,775.8 1649.4,775.8 1650.0,775.8 1650.5,778.7 1651.1,775.8 1651.6,778.7 1652.2,775.8 1652.7,775.8 1653.3,775.8 1653.8,781.7 1654.4,775.8 1654.9,775.8 1655.5,775.8 1656.0,775.8 1656.6,781.7 1657.1,775.8 1657.7,778.7 1658.2,775.8 1658.8,775.8 1659.3,775.8 1659.9,775.8 1660.4,775.8 1661.0,775.8 1661.5,775.8 1662.1,775.8 1662.6,778.7 1663.2,778.7 1663.7,778.7 1664.3,775.8 1664.8,778.7 1665.4,781.7 1665.9,781.7 1666.5,778.7 1667.0,778.7 1667.6,775.8 1668.1,775.8 1668.7,778.7 1669.2,775.8 1669.8,778.7 1670.3,778.7 1670.9,778.7 1671.4,775.8 1672.0,775.8 1672.5,775.8 1673.1,775.8 1673.6,778.7 1674.2,775.8 1674.7,775.8 1675.3,775.8 1675.8,778.7 1676.4,778.7 1676.9,775.8 1677.5,775.8 1678.0,778.7 1678.6,778.7 1679.1,775.8 1679.7,775.8 1680.2,778.7 1680.8,775.8 1681.3,778.7 1681.9,778.7 1682.4,778.7 1683.0,778.7 1683.5,778.7 1684.1,775.8 1684.6,775.8 1685.2,778.7 1685.7,778.7 1686.3,775.8 1686.8,778.7 1687.4,778.7 1687.9,781.7 1688.5,778.7 1689.0,775.8 1689.6,775.8 1690.1,775.8 1690.7,778.7 1691.2,778.7 1691.8,775.8 1692.3,775.8 1692.9,775.8 1693.4,775.8 1694.0,775.8 1694.5,781.7 1695.1,778.7 1695.6,775.8 1696.2,775.8 1696.7,775.8 1697.3,775.8 1697.8,775.8 1698.4,778.7 1698.9,775.8 1699.5,775.8 1700.0,775.8 1700.6,778.7 1701.1,778.7 1701.7,775.8 1702.2,778.7 1702.8,775.8 1703.3,775.8 1703.9,778.7 1704.4,775.8 1705.0,778.7 1705.5,778.7 1706.1,778.7 1706.6,775.8 1707.2,775.8 1707.7,775.8 1708.3,778.7 1708.8,775.8 1709.4,778.7 1709.9,778.7 1710.5,775.8 1711.0,775.8 1711.6,775.8 1712.1,775.8 1712.7,775.8 1713.2,775.8 1713.8,775.8 1714.3,778.7 1714.9,784.6 1715.4,775.8 1716.0,778.7 1716.5,778.7 1717.1,775.8 1717.6,775.8 1718.2,775.8 1718.7,775.8 1719.3,775.8 1719.8,778.7 1720.4,778.7 1720.9,778.7 1721.5,775.8 1722.0,775.8 1722.6,775.8 1723.1,775.8 1723.7,775.8 1724.2,787.5 1724.8,778.7 1725.3,775.8 1725.9,775.8 1726.4,775.8 1727.0,778.7 1727.5,775.8 1728.1,775.8 1728.6,775.8 1729.2,775.8 1729.7,775.8 1730.3,775.8 1730.8,775.8 1731.4,775.8 1731.9,775.8 1732.5,778.7 1733.0,775.8 1733.6,775.8 1734.1,775.8 1734.7,778.7 1735.2,778.7 1735.8,775.8 1736.3,775.8 1736.9,778.7 1737.4,778.7 1738.0,778.7 1738.5,775.8 1739.1,775.8 1739.6,775.8 1740.2,775.8 1740.7,775.8 1741.3,778.7 1741.8,775.8 1742.4,781.7 1742.9,778.7 1743.5,775.8 1744.0,778.7 1744.6,778.7 1745.1,778.7 1745.7,775.8 1746.2,775.8 1746.8,775.8 1747.3,778.7 1747.9,775.8 1748.4,778.7 1749.0,775.8 1749.5,775.8 1750.1,787.5 1750.6,775.8 1751.2,778.7 1751.7,775.8 1752.3,778.7 1752.8,775.8 1753.4,775.8 1753.9,775.8 1754.5,778.7 1755.0,775.8 1755.6,778.7 1756.1,775.8 1756.7,775.8 1757.2,778.7 1757.8,775.8 1758.3,775.8 1758.9,775.8 1759.4,775.8 1760.0,775.8 1760.5,775.8 1761.1,775.8 1761.6,775.8 1762.2,775.8 1762.7,775.8 1763.3,784.6 1763.8,775.8 1764.4,778.7 1764.9,775.8 1765.5,778.7 1766.0,775.8 1766.6,775.8 1767.1,775.8 1767.7,775.8 1768.2,775.8 1768.8,778.7 1768.8,930" fill="#4285f4" fill-opacity="0.3"/>
<polyline points="128.7,778.7 129.2,775.8 129.8,1064.9 130.4,1064.9 130.9,1064.9 131.5,1064.9 132.0,1064.9 132.6,1064.9 133.1,775.8 133.7,778.7 134.2,778.7 134.8,775.8 135.3,775.8 135.9,778.7 136.4,778.7 137.0,775.8 137.5,775.8 138.1,775.8 138.6,775.8 139.2,775.8 139.7,778.7 140.3,775.8 140.8,778.7 141.4,778.7 141.9,778.7 142.5,775.8 143.0,778.7 143.6,775.8 144.1,775.8 144.7,775.8 145.2,775.8 145.8,778.7 146.3,778.7 146.9,778.7 147.4,775.8 148.0,775.8 148.5,781.7 149.1,775.8 149.6,775.8 150.2,778.7 150.7,775.8 151.3,775.8 151.8,778.7 152.4,775.8 152.9,775.8 153.5,775.8 154.0,778.7 154.6,775.8 155.1,778.7 155.7,781.7 156.2,775.8 156.8,778.7 157.3,775.8 157.9,778.7 158.4,775.8 159.0,775.8 159.5,775.8 160.1,775.8 160.6,778.7 161.2,775.8 161.7,775.8 162.3,775.8 162.8,784.6 163.4,775.8 163.9,775.8 164.5,775.8 165.0,778.7 165.6,775.8 166.1,775.8 166.7,775.8 167.2,775.8 167.8,778.7 168.3,778.7 168.9,775.8 169.4,778.7 170.0,778.7 170.5,778.7 171.1,778.7 171.6,778.7 172.2,775.8 172.7,778.7 173.3,778.7 173.8,778.7 174.4,775.8 174.9,778.7 175.5,778.7 176.0,775.8 176.6,775.8 177.1,775.8 177.7,778.7 178.2,778.7 178.8,778.7 179.3,775.8 179.9,775.8 180.4,778.7 181.0,778.7 181.5,778.7 182.1,778.7 182.6,778.7 183.2,784.6 183.7,778.7 184.3,778.7 184.8,778.7 185.4,778.7 185.9,781.7 186.5,775.8 187.0,775.8 187.6,778.7 188.1,775.8 188.7,775.8 189.2,775.8 189.8,775.8 190.3,775.8 190.9,775.8 191.4,775.8 192.0,846.0 192.5,831.9 193.1,851.0 193.6,829.5 194.2,837.1 194.7,823.3 195.3,839.8 195.8,835.2 196.4,841.9 196.9,781.7 197.5,775.8 198.0,775.8 198.6,778.7 199.1,778.7 199.7,775.8 200.2,787.5 200.8,775.8 201.3,778.7 201.9,775.8 202.4,775.8 203.0,775.8 203.5,778.7 204.1,778.7 204.6,778.7 205.2,778.7 205.7,778.7 206.3,775.8 206.8,775.8 207.4,775.8 207.9,778.7 208.5,775.8 209.0,775.8 209.6,778.7 210.1,775.8 210.7,775.8 211.2,775.8 211.8,775.8 212.3,778.7 212.9,775.8 213.4,775.8 214.0,775.8 214.5,775.8 215.1,775.8 215.6,775.8 216.2,775.8 216.7,775.8 217.3,778.7 217.8,778.7 218.4,778.7 218.9,775.8 219.5,775.8 220.0,778.7 220.6,775.8 221.1,775.8 221.7,775.8 222.2,775.8 222.8,775.8 223.3,778.7 223.9,778.7 224.4,775.8 225.0,775.8 225.5,775.8 226.1,778.7 226.6,775.8 227.2,775.8 227.7,778.7 228.3,778.7 228.8,778.7 229.4,778.7 229.9,775.8 230.5,778.7 231.0,778.7 231.6,778.7 232.1,775.8 232.7,778.7 233.2,778.7 233.8,775.8 234.3,775.8 234.9,778.7 235.4,775.8 236.0,781.7 236.5,775.8 237.1,778.7 237.6,781.7 238.2,778.7 238.7,778.7 239.3,775.8 239.8,778.7 240.4,775.8 240.9,775.8 241.5,775.8 242.0,778.7 242.6,775.8 243.1,775.8 243.7,775.8 244.2,778.7 244.8,775.8 245.3,778.7 245.9,778.7 246.4,775.8 247.0,775.8 247.5,775.8 248.1,775.8 248.6,775.8 249.2,775.8 249.7,775.8 250.3,775.8 250.8,775.8 251.4,775.8 251.9,775.8 252.5,775.8 253.0,775.8 253.6,775.8 254.1,775.8 254.7,775.8 255.2,778.7 255.8,775.8 256.3,775.8 256.9,775.8 257.4,778.7 258.0,778.7 258.5,775.8 259.1,778.7 259.6,778.7 260.2,778.7 260.7,775.8 261.3,775.8 261.8,778.7 262.4,775.8 262.9,775.8 263.5,778.7 264.0,775.8 264.6,775.8 265.1,778.7 265.7,775.8 266.2,778.7 266.8,781.7 267.3,775.8 267.9,775.8 268.4,778.7 269.0,778.7 269.5,784.6 270.1,778.7 270.6,778.7 271.2,778.7 271.7,775.8 272.3,778.7 272.8,781.7 273.4,778.7 273.9,778.7 274.5,775.8 275.0,775.8 275.6,778.7 276.1,775.8 276.7,775.8 277.2,775.8 277.8,778.7 278.3,778.7 278.9,778.7 279.4,775.8 280.0,778.7 280.5,778.7 281.1,778.7 281.6,775.8 282.2,775.8 282.7,778.7 283.3,778.7 283.8,775.8 284.4,775.8 284.9,778.7 285.5,778.7 286.0,775.8 286.6,778.7 287.1,778.7 287.7,775.8 288.2,775.8 288.8,775.8 289.3,778.7 289.9,775.8 290.4,778.7 291.0,775.8 291.5,778.7 292.1,778.7 292.6,775.8 293.2,775.8 293.7,778.7 294.3,778.7 294.8,784.6 295.4,778.7 295.9,778.7 296.5,778.7 297.0,778.7 297.6,775.8 298.1,775.8 298.7,775.8 299.2,775.8 299.8,775.8 300.3,778.7 300.9,775.8 301.4,778.7 302.0,784.6 302.5,778.7 303.1,775.8 303.6,775.8 304.2,778.7 304.7,775.8 305.3,775.8 305.8,778.7 306.4,775.8 306.9,775.8 307.5,775.8 308.0,775.8 308.6,775.8 309.1,775.8 309.7,775.8 310.2,778.7 310.8,775.8 311.3,775.8 311.9,775.8 312.4,778.7 313.0,778.7 313.5,778.7 314.1,778.7 314.6,778.7 315.2,775.8 315.7,778.7 316.3,778.7 316.8,778.7 317.4,775.8 317.9,775.8 318.5,775.8 319.0,778.7 319.6,778.7 320.1,778.7 320.7,796.3 321.2,778.7 321.8,775.8 322.3,781.7 322.9,775.8 323.4,781.7 324.0,778.7 324.5,775.8 325.1,778.7 325.6,778.7 326.2,781.7 326.7,778.7 327.3,778.7 327.8,775.8 328.4,778.7 328.9,775.8 329.5,778.7 330.0,775.8 330.6,778.7 331.1,775.8 331.7,775.8 332.2,778.7 332.8,778.7 333.3,775.8 333.9,775.8 334.4,778.7 335.0,775.8 335.5,775.8 336.1,775.8 336.6,775.8 337.2,775.8 337.7,781.7 338.3,778.7 338.8,775.8 339.4,778.7 339.9,775.8 340.5,775.8 341.0,787.5 341.6,778.7 342.1,775.8 342.7,784.6 343.2,775.8 343.8,775.8 344.3,775.8 344.9,778.7 345.4,775.8 346.0,775.8 346.5,775.8 347.1,775.8 347.6,775.8 348.2,778.7 348.7,778.7 349.3,775.8 349.8,775.8 350.4,778.7 350.9,778.7 351.5,778.7 352.0,778.7 352.6,778.7 353.1,778.7 353.7,778.7 354.2,778.7 354.8,778.7 355.3,775.8 355.9,775.8 356.4,778.7 357.0,775.8 357.5,775.8 358.1,775.8 358.6,775.8 359.2,778.7 359.7,775.8 360.3,778.7 360.8,775.8 361.4,784.6 361.9,775.8 362.5,778.7 363.0,775.8 363.6,778.7 364.1,778.7 364.7,775.8 365.2,778.7 365.8,775.8 366.3,778.7 366.9,775.8 367.4,775.8 368.0,775.8 368.5,778.7 369.1,775.8 369.6,775.8 370.2,778.7 370.7,778.7 371.3,775.8 371.8,775.8 372.4,778.7 372.9,775.8 373.5,775.8 374.0,775.8 374.6,775.8 375.1,778.7 375.7,778.7 376.2,775.8 376.8,778.7 377.3,778.7 377.9,775.8 378.4,775.8 379.0,775.8 379.5,778.7 380.1,775.8 380.6,775.8 381.2,778.7 381.7,775.8 382.3,784.6 382.8,775.8 383.4,775.8 383.9,775.8 384.5,775.8 385.0,778.7 385.6,775.8 386.1,775.8 386.7,775.8 387.2,775.8 387.8,778.7 388.3,775.8 388.9,775.8 389.4,775.8 390.0,775.8 390.5,775.8 391.1,775.8 391.6,778.7 392.2,775.8 392.7,781.7 393.3,775.8 393.8,775.8 394.4,778.7 394.9,778.7 395.5,775.8 396.0,778.7 396.6,778.7 397.1,775.8 397.7,775.8 398.2,778.7 398.8,775.8 399.3,823.4 399.9,846.8 400.4,831.9 401.0,844.0 401.5,816.7 402.1,846.7 402.6,811.1 403.2,848.5 403.7,825.7 404.3,854.4 404.8,775.8 405.4,999.6 405.9,778.7 406.5,999.0 407.0,778.7 407.6,1033.4 408.1,778.7 408.7,775.8 409.2,775.8 409.8,775.8 410.3,778.7 410.9,775.8 411.4,775.8 412.0,775.8 412.5,775.8 413.1,775.8 413.6,775.8 414.2,775.8 414.7,778.7 415.3,775.8 415.8,775.8 416.4,775.8 416.9,778.7 417.5,778.7 418.0,775.8 418.6,775.8 419.1,778.7 419.7,778.7 420.2,778.7 420.8,775.8 421.3,778.7 421.9,778.7 422.4,775.8 423.0,778.7 423.5,775.8 424.1,775.8 424.6,775.8 425.2,775.8 425.7,778.7 426.3,775.8 426.8,778.7 427.4,778.7 427.9,778.7 428.5,778.7 429.0,775.8 429.6,775.8 430.1,781.7 430.7,778.7 431.2,775.8 431.8,778.7 432.3,778.7 432.9,775.8 433.4,778.7 434.0,778.7 434.5,775.8 435.1,778.7 435.6,784.6 436.2,775.8 436.7,778.7 437.3,778.7 437.8,775.8 438.4,778.7 438.9,781.7 439.5,851.9 440.0,835.0 440.6,862.9 441.1,824.6 441.7,868.3 442.2,835.7 442.8,852.0 443.3,835.9 443.9,845.8 444.4,827.3 445.0,842.3 445.5,832.4 446.1,852.8 446.6,838.5 447.2,866.6 447.7,834.6 448.3,851.8 448.8,827.6 449.4,873.0 449.9,826.1 450.5,864.5 451.0,832.7 451.6,850.9 452.1,836.6 452.7,859.5 453.2,846.0 453.8,860.8 454.3,825.2 454.9,859.6 455.4,822.1 456.0,848.0 456.5,827.0 457.1,838.2 457.6,821.2 458.2,858.0 458.7,827.4 459.3,863.4 459.8,824.7 460.4,855.9 460.9,818.7 461.5,866.3 462.0,827.3 462.6,854.9 463.1,775.8 463.7,778.7 464.2,778.7 464.8,775.8 465.3,781.7 465.9,775.8 466.4,775.8 467.0,778.7 467.5,775.8 468.1,775.8 468.6,778.7 469.2,778.7 469.7,775.8 470.3,775.8 470.8,781.7 471.4,778.7 471.9,775.8 472.5,775.8 473.0,781.7 473.6,778.7 474.1,775.8 474.7,775.8 475.2,775.8 475.8,778.7 476.3,781.7 476.9,778.7 477.4,778.7 478.0,778.7 478.5,778.7 479.1,778.7 479.6,778.7 480.2,775.8 480.7,846.4 481.3,852.1 481.8,832.1 482.4,851.1 482.9,837.4 483.5,861.8 484.0,833.5 484.6,857.5 485.1,832.3 485.7,865.5 486.2,852.7 486.8,882.8 487.3,861.8 487.9,873.3 488.4,868.9 489.0,871.6 489.5,823.8 490.1,844.5 490.6,828.5 491.2,857.4 491.7,833.3 492.3,858.7 492.8,840.5 493.4,853.3 493.9,834.6 494.5,864.4 495.0,831.7 495.6,859.3 496.1,836.4 496.7,858.0 497.2,778.7 497.8,778.7 498.3,778.7 498.9,778.7 499.4,775.8 500.0,778.7 500.5,778.7 501.1,775.8 501.6,778.7 502.2,778.7 502.7,778.7 503.3,775.8 503.8,778.7 504.4,775.8 504.9,775.8 505.5,778.7 506.0,775.8 506.6,775.8 507.1,775.8 507.7,784.6 508.2,775.8 508.8,778.7 509.3,778.7 509.9,778.7 510.4,778.7 511.0,778.7 511.5,778.7 512.1,778.7 512.6,778.7 513.2,778.7 513.7,781.7 514.3,775.8 514.8,778.7 515.4,778.7 515.9,778.7 516.5,775.8 517.0,775.8 517.6,778.7 518.1,781.7 518.7,778.7 519.2,778.7 519.8,784.6 520.3,775.8 520.9,775.8 521.4,778.7 522.0,778.7 522.5,778.7 523.1,778.7 523.6,775.8 524.2,778.7 524.7,778.7 525.3,775.8 525.8,778.7 526.4,775.8 526.9,778.7 527.5,775.8 528.0,775.8 528.6,775.8 529.1,778.7 529.7,778.7 530.2,775.8 530.8,775.8 531.3,775.8 531.9,775.8 532.4,775.8 533.0,778.7 533.5,775.8 534.1,775.8 534.6,778.7 535.2,784.6 535.7,778.7 536.3,775.8 536.8,778.7 537.4,778.7 537.9,775.8 538.5,778.7 539.0,778.7 539.6,787.5 540.1,778.7 540.7,775.8 541.2,775.8 541.8,775.8 542.3,775.8 542.9,778.7 543.4,778.7 544.0,778.7 544.5,778.7 545.1,778.7 545.6,775.8 546.2,778.7 546.7,775.8 547.3,775.8 547.8,778.7 548.4,781.7 548.9,778.7 549.5,778.7 550.0,778.7 550.6,775.8 551.1,778.7 551.7,775.8 552.2,775.8 552.8,778.7 553.3,778.7 553.9,775.8 554.4,778.7 555.0,778.7 555.5,778.7 556.1,775.8 556.6,775.8 557.2,778.7 557.7,775.8 558.3,775.8 558.8,775.8 559.4,775.8 559.9,775.8 560.5,775.8 561.0,778.7 561.6,778.7 562.1,778.7 562.7,775.8 563.2,775.8 563.8,775.8 564.3,778.7 564.9,775.8 565.4,775.8 566.0,775.8 566.5,778.7 567.1,775.8 567.6,775.8 568.2,778.7 568.7,778.7 569.3,778.7 569.8,778.7 570.4,775.8 570.9,778.7 571.5,775.8 572.0,775.8 572.6,775.8 573.1,781.7 573.7,778.7 574.2,775.8 574.8,775.8 575.3,778.7 575.9,775.8 576.4,778.7 577.0,781.7 577.5,778.7 578.1,775.8 578.6,775.8 579.2,775.8 579.7,775.8 580.3,778.7 580.8,778.7 581.4,775.8 581.9,778.7 582.5,775.8 583.0,778.7 583.6,778.7 584.1,778.7 584.7,775.8 585.2,775.8 585.8,784.6 586.3,775.8 586.9,778.7 587.4,781.7 588.0,778.7 588.5,775.8 589.1,775.8 589.6,778.7 590.2,778.7 590.7,775.8 591.3,775.8 591.8,778.7 592.4,775.8 592.9,781.7 593.5,778.7 594.0,778.7 594.6,778.7 595.1,775.8 595.7,775.8 596.2,775.8 596.8,775.8 597.3,781.7 597.9,778.7 598.4,775.8 599.0,775.8 599.5,778.7 600.1,775.8 600.6,775.8 601.2,775.8 601.7,778.7 602.3,775.8 602.8,775.8 603.4,775.8 603.9,778.7 604.5,775.8 605.0,775.8 605.6,775.8 606.1,775.8 606.7,775.8 607.2,778.7 607.8,775.8 608.3,775.8 608.8,778.7 609.4,784.6 609.9,775.8 610.5,775.8 611.0,775.8 611.6,778.7 612.1,775.8 612.7,775.8 613.2,775.8 613.8,775.8 614.3,775.8 614.9,775.8 615.4,775.8 616.0,787.5 616.5,778.7 617.1,775.8 617.6,778.7 618.2,775.8 618.7,775.8 619.3,778.7 619.8,775.8 620.4,778.7 620.9,778.7 621.5,787.5 622.0,787.5 622.6,781.7 623.1,778.7 623.7,775.8 624.2,781.7 624.8,775.8 625.3,775.8 625.9,778.7 626.4,775.8 627.0,775.8 627.5,778.7 628.1,775.8 628.6,784.6 629.2,778.7 629.7,781.7 630.3,775.8 630.8,778.7 631.4,778.7 631.9,775.8 632.5,775.8 633.0,775.8 633.6,775.8 634.1,775.8 634.7,775.8 635.2,775.8 635.8,775.8 636.3,775.8 636.9,778.7 637.4,778.7 638.0,778.7 638.5,778.7 639.1,778.7 639.6,775.8 640.2,775.8 640.7,778.7 641.3,778.7 641.8,775.8 642.4,778.7 642.9,775.8 643.5,784.6 644.0,778.7 644.6,775.8 645.1,775.8 645.7,775.8 646.2,775.8 646.8,778.7 647.3,778.7 647.9,775.8 648.4,775.8 649.0,778.7 649.5,778.7 650.1,778.7 650.6,775.8 651.2,775.8 651.7,778.7 652.3,778.7 652.8,775.8 653.4,784.6 653.9,778.7 654.5,775.8 655.0,778.7 655.6,775.8 656.1,778.7 656.7,778.7 657.2,778.7 657.8,775.8 658.3,778.7 658.9,781.7 659.4,775.8 660.0,775.8 660.5,775.8 661.1,775.8 661.6,778.7 662.2,778.7 662.7,778.7 663.3,778.7 663.8,775.8 664.4,775.8 664.9,775.8 665.5,775.8 666.0,778.7 666.6,778.7 667.1,778.7 667.7,775.8 668.2,775.8 668.8,775.8 669.3,778.7 669.9,778.7 670.4,775.8 671.0,778.7 671.5,775.8 672.1,778.7 672.6,781.7 673.2,775.8 673.7,775.8 674.3,778.7 674.8,784.6 675.4,775.8 675.9,775.8 676.5,778.7 677.0,775.8 677.6,775.8 678.1,781.7 678.7,775.8 679.2,778.7 679.8,775.8 680.3,778.7 680.9,775.8 681.4,775.8 682.0,775.8 682.5,778.7 683.1,775.8 683.6,775.8 684.2,778.7 684.7,775.8 685.3,778.7 685.8,778.7 686.4,775.8 686.9,778.7 687.5,775.8 688.0,778.7 688.6,778.7 689.1,778.7 689.7,778.7 690.2,775.8 690.8,778.7 691.3,775.8 691.9,784.6 692.4,778.7 693.0,775.8 693.5,778.7 694.1,778.7 694.6,778.7 695.2,775.8 695.7,775.8 696.3,775.8 696.8,778.7 697.4,781.7 697.9,775.8 698.5,778.7 699.0,778.7 699.6,775.8 700.1,775.8 700.7,775.8 701.2,775.8 701.8,778.7 702.3,775.8 702.9,775.8 703.4,775.8 704.0,778.7 704.5,796.3 705.1,775.8 705.6,781.7 706.2,775.8 706.7,775.8 707.3,778.7 707.8,778.7 708.4,778.7 708.9,775.8 709.5,778.7 710.0,787.5 710.6,778.7 711.1,775.8 711.7,775.8 712.2,775.8 712.8,775.8 713.3,778.7 713.9,775.8 714.4,787.5 715.0,775.8 715.5,775.8 716.1,775.8 716.6,778.7 717.2,775.8 717.7,778.7 718.3,775.8 718.8,775.8 719.4,778.7 719.9,775.8 720.5,775.8 721.0,775.8 721.6,778.7 722.1,775.8 722.7,775.8 723.2,775.8 723.8,775.8 724.3,778.7 724.9,775.8 725.4,775.8 726.0,778.7 726.5,775.8 727.1,778.7 727.6,775.8 728.2,775.8 728.7,778.7 729.3,778.7 729.8,778.7 730.4,781.7 730.9,775.8 731.5,778.7 732.0,775.8 732.6,778.7 733.1,778.7 733.7,778.7 734.2,778.7 734.8,775.8 735.3,775.8 735.9,775.8 736.4,778.7 737.0,778.7 737.5,778.7 738.1,775.8 738.6,775.8 739.2,775.8 739.7,778.7 740.3,775.8 740.8,778.7 741.4,778.7 741.9,778.7 742.5,778.7 743.0,778.7 743.6,775.8 744.1,784.6 744.7,775.8 745.2,775.8 745.8,775.8 746.3,784.6 746.9,784.6 747.4,790.4 748.0,775.8 748.5,775.8 749.1,778.7 749.6,778.7 750.2,775.8 750.7,787.5 751.3,778.7 751.8,775.8 752.4,775.8 752.9,778.7 753.5,775.8 754.0,778.7 754.6,775.8 755.1,778.7 755.7,778.7 756.2,775.8 756.8,775.8 757.3,778.7 757.9,778.7 758.4,778.7 759.0,775.8 759.5,775.8 760.1,775.8 760.6,775.8 761.2,775.8 761.7,775.8 762.3,775.8 762.8,787.5 763.4,775.8 763.9,784.6 764.5,778.7 765.0,775.8 765.6,775.8 766.1,775.8 766.7,778.7 767.2,775.8 767.8,775.8 768.3,778.7 768.9,778.7 769.4,775.8 770.0,775.8 770.5,778.7 771.1,778.7 771.6,775.8 772.2,775.8 772.7,775.8 773.3,778.7 773.8,778.7 774.4,778.7 774.9,778.7 775.5,775.8 776.0,778.7 776.6,775.8 777.1,778.7 777.7,775.8 778.2,775.8 778.8,778.7 779.3,775.8 779.9,778.7 780.4,778.7 781.0,778.7 781.5,775.8 782.1,775.8 782.6,775.8 783.2,778.7 783.7,778.7 784.3,778.7 784.8,775.8 785.4,775.8 785.9,781.7 786.5,778.7 787.0,778.7 787.6,781.7 788.1,775.8 788.7,775.8 789.2,778.7 789.8,775.8 790.3,775.8 790.9,781.7 791.4,778.7 792.0,775.8 792.5,778.7 793.1,775.8 793.6,778.7 794.2,775.8 794.7,781.7 795.3,775.8 795.8,781.7 796.4,778.7 796.9,775.8 797.5,778.7 798.0,778.7 798.6,775.8 799.1,775.8 799.7,775.8 800.2,775.8 800.8,775.8 801.3,778.7 801.9,778.7 802.4,775.8 803.0,781.7 803.5,775.8 804.1,778.7 804.6,778.7 805.2,778.7 805.7,775.8 806.3,778.7 806.8,778.7 807.4,775.8 807.9,778.7 808.5,778.7 809.0,778.7 809.6,775.8 810.1,775.8 810.7,775.8 811.2,778.7 811.8,778.7 812.3,775.8 812.9,778.7 813.4,775.8 814.0,775.8 814.5,778.7 815.1,775.8 815.6,778.7 816.2,778.7 816.7,778.7 817.3,778.7 817.8,778.7 818.4,775.8 818.9,775.8 819.5,775.8 820.0,778.7 820.6,778.7 821.1,778.7 821.7,775.8 822.2,775.8 822.8,778.7 823.3,778.7 823.9,778.7 824.4,778.7 825.0,778.7 825.5,778.7 826.1,778.7 826.6,775.8 827.2,778.7 827.7,775.8 828.3,778.7 828.8,775.8 829.4,778.7 829.9,778.7 830.5,778.7 831.0,775.8 831.6,778.7 832.1,775.8 832.7,778.7 833.2,846.7 833.8,822.4 834.3,866.2 834.9,824.2 835.4,849.4 836.0,833.9 836.5,858.9 837.1,844.7 837.6,863.7 838.2,843.3 838.7,870.8 839.3,849.7 839.8,868.7 840.4,842.5 840.9,775.8 841.5,775.8 842.0,775.8 842.6,775.8 843.1,775.8 843.7,775.8 844.2,775.8 844.8,778.7 845.3,775.8 845.9,778.7 846.4,775.8 847.0,775.8 847.5,775.8 848.1,775.8 848.6,775.8 849.2,778.7 849.7,778.7 850.3,778.7 850.8,775.8 851.4,778.7 851.9,778.7 852.5,778.7 853.0,778.7 853.6,778.7 854.1,775.8 854.7,778.7 855.2,778.7 855.8,775.8 856.3,778.7 856.9,778.7 857.4,778.7 858.0,778.7 858.5,778.7 859.1,778.7 859.6,778.7 860.2,775.8 860.7,778.7 861.3,775.8 861.8,775.8 862.4,778.7 862.9,775.8 863.5,775.8 864.0,775.8 864.6,775.8 865.1,775.8 865.7,775.8 866.2,778.7 866.8,775.8 867.3,775.8 867.9,775.8 868.4,778.7 869.0,778.7 869.5,778.7 870.1,775.8 870.6,775.8 871.2,778.7 871.7,775.8 872.3,775.8 872.8,775.8 873.4,775.8 873.9,775.8 874.5,775.8 875.0,775.8 875.6,775.8 876.1,775.8 876.7,784.6 877.2,775.8 877.8,778.7 878.3,775.8 878.9,781.7 879.4,778.7 880.0,775.8 880.5,775.8 881.1,778.7 881.6,778.7 882.2,775.8 882.7,775.8 883.3,775.8 883.8,775.8 884.4,775.8 884.9,778.7 885.5,775.8 886.0,775.8 886.6,778.7 887.1,787.5 887.7,778.7 888.2,775.8 888.8,775.8 889.3,775.8 889.9,775.8 890.4,775.8 891.0,775.8 891.5,781.7 892.1,775.8 892.6,775.8 893.2,778.7 893.7,775.8 894.3,775.8 894.8,778.7 895.4,775.8 895.9,778.7 896.5,775.8 897.0,778.7 897.6,775.8 898.1,778.7 898.7,775.8 899.2,778.7 899.8,775.8 900.3,775.8 900.9,778.7 901.4,778.7 902.0,778.7 902.5,775.8 903.1,775.8 903.6,775.8 904.2,775.8 904.7,778.7 905.3,775.8 905.8,778.7 906.4,778.7 906.9,775.8 907.5,778.7 908.0,778.7 908.6,775.8 909.1,781.7 909.7,778.7 910.2,775.8 910.8,778.7 911.3,775.8 911.9,775.8 912.4,775.8 913.0,778.7 913.5,775.8 914.1,775.8 914.6,781.7 915.2,775.8 915.7,775.8 916.3,775.8 916.8,778.7 917.4,775.8 917.9,775.8 918.5,778.7 919.0,778.7 919.6,781.7 920.1,775.8 920.7,775.8 921.2,778.7 921.8,778.7 922.3,775.8 922.9,781.7 923.4,778.7 924.0,778.7 924.5,775.8 925.1,778.7 925.6,778.7 926.2,775.8 926.7,778.7 927.3,775.8 927.8,775.8 928.4,775.8 928.9,775.8 929.5,778.7 930.0,775.8 930.6,778.7 931.1,778.7 931.7,778.7 932.2,775.8 932.8,775.8 933.3,775.8 933.9,775.8 934.4,778.7 935.0,778.7 935.5,775.8 936.1,778.7 936.6,778.7 937.2,775.8 937.7,778.7 938.3,775.8 938.8,775.8 939.4,778.7 939.9,778.7 940.5,778.7 941.0,778.7 941.6,829.4 942.1,847.8 942.7,839.0 943.2,850.6 943.8,823.6 944.3,856.0 944.9,827.2 945.4,859.0 946.0,850.3 946.5,860.2 947.1,835.8 947.6,851.9 948.2,816.1 948.7,835.2 949.3,821.6 949.8,858.4 950.4,818.3 950.9,861.7 951.5,821.3 952.0,846.7 952.6,825.9 953.1,854.7 953.7,838.4 954.2,866.9 954.8,846.2 955.3,863.2 955.9,847.2 956.4,856.8 957.0,847.9 957.5,778.7 958.1,778.7 958.6,778.7 959.2,781.7 959.7,778.7 960.3,775.8 960.8,775.8 961.4,778.7 961.9,778.7 962.5,778.7 963.0,775.8 963.6,778.7 964.1,778.7 964.7,778.7 965.2,778.7 965.8,778.7 966.3,778.7 966.9,784.6 967.4,775.8 968.0,778.7 968.5,778.7 969.1,781.7 969.6,775.8 970.2,775.8 970.7,775.8 971.3,775.8 971.8,775.8 972.4,778.7 972.9,778.7 973.5,778.7 974.0,778.7 974.6,778.7 975.1,778.7 975.7,775.8 976.2,778.7 976.8,778.7 977.3,775.8 977.9,775.8 978.4,775.8 979.0,775.8 979.5,775.8 980.1,775.8 980.6,778.7 981.2,778.7 981.7,778.7 982.3,778.7 982.8,778.7 983.4,778.7 983.9,790.4 984.5,778.7 985.0,778.7 985.6,775.8 986.1,778.7 986.7,775.8 987.2,778.7 987.8,778.7 988.3,775.8 988.9,781.7 989.4,775.8 990.0,778.7 990.5,778.7 991.1,778.7 991.6,778.7 992.2,775.8 992.7,775.8 993.3,775.8 993.8,778.7 994.4,778.7 994.9,778.7 995.5,775.8 996.0,778.7 996.6,778.7 997.1,778.7 997.7,775.8 998.2,775.8 998.8,775.8 999.3,775.8 999.9,778.7 1000.4,778.7 1001.0,775.8 1001.5,778.7 1002.1,775.8 1002.6,778.7 1003.2,778.7 1003.7,778.7 1004.3,778.7 1004.8,781.7 1005.4,778.7 1005.9,778.7 1006.5,778.7 1007.0,778.7 1007.6,775.8 1008.1,824.0 1008.7,805.8 1009.2,815.0 1009.8,816.2 1010.3,819.7 1010.9,814.5 1011.4,778.7 1012.0,778.7 1012.5,778.7 1013.1,778.7 1013.6,778.7 1014.2,778.7 1014.7,775.8 1015.3,778.7 1015.8,778.7 1016.4,775.8 1016.9,784.6 1017.5,775.8 1018.0,778.7 1018.6,775.8 1019.1,775.8 1019.7,775.8 1020.2,778.7 1020.8,775.8 1021.3,775.8 1021.9,775.8 1022.4,775.8 1023.0,778.7 1023.5,775.8 1024.1,775.8 1024.6,781.7 1025.2,775.8 1025.7,778.7 1026.3,775.8 1026.8,784.6 1027.4,775.8 1027.9,775.8 1028.5,775.8 1029.0,775.8 1029.6,778.7 1030.1,775.8 1030.7,778.7 1031.2,775.8 1031.8,775.8 1032.3,778.7 1032.9,775.8 1033.4,775.8 1034.0,775.8 1034.5,775.8 1035.1,781.7 1035.6,775.8 1036.2,778.7 1036.7,778.7 1037.3,775.8 1037.8,781.7 1038.4,775.8 1038.9,778.7 1039.5,775.8 1040.0,775.8 1040.6,775.8 1041.1,778.7 1041.7,778.7 1042.2,778.7 1042.8,778.7 1043.3,775.8 1043.9,778.7 1044.4,775.8 1045.0,775.8 1045.5,775.8 1046.1,775.8 1046.6,775.8 1047.2,778.7 1047.7,778.7 1048.3,778.7 1048.8,775.8 1049.4,775.8 1049.9,784.6 1050.5,775.8 1051.0,775.8 1051.6,775.8 1052.1,778.7 1052.7,775.8 1053.2,775.8 1053.8,778.7 1054.3,778.7 1054.9,775.8 1055.4,775.8 1056.0,775.8 1056.5,778.7 1057.1,778.7 1057.6,778.7 1058.2,778.7 1058.7,778.7 1059.3,784.6 1059.8,778.7 1060.4,778.7 1060.9,775.8 1061.5,778.7 1062.0,775.8 1062.6,775.8 1063.1,775.8 1063.7,778.7 1064.2,775.8 1064.8,778.7 1065.3,778.7 1065.9,775.8 1066.4,775.8 1067.0,778.7 1067.5,778.7 1068.1,775.8 1068.6,775.8 1069.2,778.7 1069.7,778.7 1070.3,778.7 1070.8,775.8 1071.4,778.7 1071.9,775.8 1072.5,775.8 1073.0,778.7 1073.6,775.8 1074.1,778.7 1074.7,775.8 1075.2,775.8 1075.8,778.7 1076.3,778.7 1076.9,778.7 1077.4,775.8 1078.0,775.8 1078.5,775.8 1079.1,775.8 1079.6,781.7 1080.2,778.7 1080.7,778.7 1081.3,775.8 1081.8,778.7 1082.4,778.7 1082.9,775.8 1083.5,778.7 1084.0,775.8 1084.6,778.7 1085.1,775.8 1085.7,775.8 1086.2,778.7 1086.8,778.7 1087.3,775.8 1087.9,784.6 1088.4,778.7 1089.0,778.7 1089.5,775.8 1090.1,775.8 1090.6,778.7 1091.2,781.7 1091.7,778.7 1092.3,775.8 1092.8,775.8 1093.4,778.7 1093.9,778.7 1094.5,775.8 1095.0,775.8 1095.6,775.8 1096.1,775.8 1096.7,781.7 1097.2,775.8 1097.8,778.7 1098.3,775.8 1098.9,784.6 1099.4,775.8 1100.0,775.8 1100.5,775.8 1101.1,775.8 1101.6,775.8 1102.2,775.8 1102.7,775.8 1103.3,775.8 1103.8,778.7 1104.4,781.7 1104.9,775.8 1105.5,778.7 1106.0,778.7 1106.6,781.7 1107.1,778.7 1107.7,775.8 1108.2,775.8 1108.8,778.7 1109.3,775.8 1109.9,775.8 1110.4,775.8 1111.0,778.7 1111.5,778.7 1112.1,778.7 1112.6,775.8 1113.2,778.7 1113.7,775.8 1114.3,775.8 1114.8,787.5 1115.4,778.7 1115.9,778.7 1116.5,778.7 1117.0,778.7 1117.6,781.7 1118.1,778.7 1118.7,775.8 1119.2,775.8 1119.8,775.8 1120.3,775.8 1120.9,775.8 1121.4,778.7 1122.0,778.7 1122.5,778.7 1123.1,778.7 1123.6,775.8 1124.2,775.8 1124.7,778.7 1125.3,775.8 1125.8,775.8 1126.4,775.8 1126.9,778.7 1127.5,775.8 1128.0,775.8 1128.6,775.8 1129.1,781.7 1129.7,778.7 1130.2,775.8 1130.8,781.7 1131.3,790.4 1131.9,775.8 1132.4,775.8 1133.0,778.7 1133.5,778.7 1134.1,778.7 1134.6,775.8 1135.2,775.8 1135.7,775.8 1136.3,775.8 1136.8,781.7 1137.4,775.8 1137.9,775.8 1138.5,775.8 1139.0,775.8 1139.6,775.8 1140.1,778.7 1140.7,781.7 1141.2,778.7 1141.8,775.8 1142.3,775.8 1142.9,775.8 1143.4,775.8 1144.0,775.8 1144.5,781.7 1145.1,775.8 1145.6,778.7 1146.2,775.8 1146.7,775.8 1147.3,775.8 1147.8,778.7 1148.4,778.7 1148.9,775.8 1149.5,775.8 1150.0,879.8 1150.6,861.0 1151.1,871.3 1151.7,854.9 1152.2,881.6 1152.8,841.4 1153.3,887.5 1153.9,775.8 1154.4,778.7 1155.0,775.8 1155.5,781.7 1156.1,775.8 1156.6,775.8 1157.2,778.7 1157.7,775.8 1158.3,775.8 1158.8,781.7 1159.4,775.8 1159.9,775.8 1160.5,775.8 1161.0,775.8 1161.6,775.8 1162.1,775.8 1162.7,775.8 1163.2,775.8 1163.8,778.7 1164.3,778.7 1164.9,781.7 1165.4,775.8 1166.0,775.8 1166.5,775.8 1167.1,775.8 1167.6,781.7 1168.2,778.7 1168.7,775.8 1169.3,784.6 1169.8,775.8 1170.4,778.7 1170.9,778.7 1171.5,778.7 1172.0,778.7 1172.6,775.8 1173.1,778.7 1173.7,778.7 1174.2,775.8 1174.8,775.8 1175.3,775.8 1175.9,778.7 1176.4,778.7 1177.0,775.8 1177.5,778.7 1178.1,775.8 1178.6,778.7 1179.2,778.7 1179.7,775.8 1180.3,778.7 1180.8,781.7 1181.4,775.8 1181.9,775.8 1182.5,775.8 1183.0,778.7 1183.6,778.7 1184.1,778.7 1184.7,775.8 1185.2,778.7 1185.8,775.8 1186.3,775.8 1186.9,778.7 1187.4,778.7 1188.0,778.7 1188.5,775.8 1189.1,778.7 1189.6,775.8 1190.2,778.7 1190.7,778.7 1191.3,775.8 1191.8,778.7 1192.4,775.8 1192.9,781.7 1193.5,775.8 1194.0,775.8 1194.6,778.7 1195.1,778.7 1195.7,778.7 1196.2,775.8 1196.8,775.8 1197.3,775.8 1197.9,781.7 1198.4,778.7 1199.0,775.8 1199.5,775.8 1200.1,778.7 1200.6,778.7 1201.2,778.7 1201.7,775.8 1202.3,778.7 1202.8,778.7 1203.4,778.7 1203.9,775.8 1204.5,778.7 1205.0,787.5 1205.6,775.8 1206.1,781.7 1206.7,775.8 1207.2,775.8 1207.8,775.8 1208.3,778.7 1208.9,775.8 1209.4,775.8 1210.0,775.8 1210.5,775.8 1211.1,781.7 1211.6,778.7 1212.2,775.8 1212.7,778.7 1213.3,775.8 1213.8,775.8 1214.4,787.5 1214.9,775.8 1215.5,775.8 1216.0,781.7 1216.6,787.5 1217.1,775.8 1217.7,778.7 1218.2,778.7 1218.8,775.8 1219.3,775.8 1219.9,775.8 1220.4,775.8 1221.0,775.8 1221.5,778.7 1222.1,775.8 1222.6,775.8 1223.2,775.8 1223.7,775.8 1224.3,778.7 1224.8,775.8 1225.4,775.8 1225.9,775.8 1226.5,778.7 1227.0,778.7 1227.6,775.8 1228.1,775.8 1228.7,778.7 1229.2,775.8 1229.8,775.8 1230.3,778.7 1230.9,775.8 1231.4,778.7 1232.0,778.7 1232.5,775.8 1233.1,781.7 1233.6,775.8 1234.2,778.7 1234.7,775.8 1235.3,775.8 1235.8,781.7 1236.4,775.8 1236.9,775.8 1237.5,775.8 1238.0,775.8 1238.6,775.8 1239.1,775.8 1239.7,775.8 1240.2,775.8 1240.8,778.7 1241.3,778.7 1241.9,775.8 1242.4,775.8 1243.0,775.8 1243.5,775.8 1244.1,775.8 1244.6,775.8 1245.2,778.7 1245.7,775.8 1246.3,778.7 1246.8,775.8 1247.4,775.8 1247.9,775.8 1248.5,778.7 1249.0,778.7 1249.6,775.8 1250.1,775.8 1250.7,778.7 1251.2,778.7 1251.8,781.7 1252.3,775.8 1252.9,775.8 1253.4,775.8 1254.0,775.8 1254.5,775.8 1255.1,778.7 1255.6,778.7 1256.2,775.8 1256.7,775.8 1257.3,775.8 1257.8,778.7 1258.4,778.7 1258.9,778.7 1259.5,781.7 1260.0,775.8 1260.6,778.7 1261.1,775.8 1261.7,778.7 1262.2,778.7 1262.8,778.7 1263.3,778.7 1263.9,778.7 1264.4,778.7 1265.0,775.8 1265.5,775.8 1266.1,775.8 1266.6,778.7 1267.2,778.7 1267.7,775.8 1268.3,778.7 1268.8,778.7 1269.4,778.7 1269.9,775.8 1270.5,778.7 1271.0,775.8 1271.6,775.8 1272.1,775.8 1272.7,778.7 1273.2,775.8 1273.8,775.8 1274.3,778.7 1274.9,775.8 1275.4,775.8 1276.0,775.8 1276.5,775.8 1277.1,775.8 1277.6,775.8 1278.2,778.7 1278.7,778.7 1279.3,775.8 1279.8,778.7 1280.4,775.8 1280.9,775.8 1281.5,778.7 1282.0,778.7 1282.6,778.7 1283.1,781.7 1283.7,775.8 1284.2,778.7 1284.8,778.7 1285.3,778.7 1285.9,775.8 1286.4,775.8 1287.0,778.7 1287.5,775.8 1288.1,775.8 1288.6,778.7 1289.2,775.8 1289.7,775.8 1290.3,778.7 1290.8,778.7 1291.4,775.8 1291.9,775.8 1292.5,790.4 1293.0,778.7 1293.6,775.8 1294.1,775.8 1294.7,778.7 1295.2,778.7 1295.8,775.8 1296.3,775.8 1296.9,775.8 1297.4,778.7 1298.0,775.8 1298.5,778.7 1299.1,775.8 1299.6,778.7 1300.2,778.7 1300.7,778.7 1301.3,778.7 1301.8,775.8 1302.4,775.8 1302.9,778.7 1303.5,775.8 1304.0,778.7 1304.6,778.7 1305.1,775.8 1305.7,775.8 1306.2,778.7 1306.8,778.7 1307.3,775.8 1307.9,778.7 1308.4,775.8 1309.0,775.8 1309.5,775.8 1310.1,775.8 1310.6,775.8 1311.2,775.8 1311.7,775.8 1312.3,775.8 1312.8,778.7 1313.4,775.8 1313.9,778.7 1314.5,775.8 1315.0,775.8 1315.6,775.8 1316.1,778.7 1316.7,775.8 1317.2,775.8 1317.8,775.8 1318.3,775.8 1318.9,778.7 1319.4,778.7 1320.0,778.7 1320.5,775.8 1321.1,778.7 1321.6,778.7 1322.2,775.8 1322.7,775.8 1323.3,778.7 1323.8,775.8 1324.4,778.7 1324.9,775.8 1325.5,778.7 1326.0,775.8 1326.6,775.8 1327.1,778.7 1327.7,775.8 1328.2,775.8 1328.8,781.7 1329.3,775.8 1329.9,775.8 1330.4,778.7 1331.0,775.8 1331.5,775.8 1332.1,775.8 1332.6,775.8 1333.2,775.8 1333.7,778.7 1334.3,775.8 1334.8,793.3 1335.4,778.7 1335.9,775.8 1336.5,775.8 1337.0,778.7 1337.6,778.7 1338.1,778.7 1338.7,775.8 1339.2,778.7 1339.8,775.8 1340.3,778.7 1340.9,778.7 1341.4,778.7 1342.0,775.8 1342.5,778.7 1343.1,778.7 1343.6,775.8 1344.2,775.8 1344.7,775.8 1345.3,775.8 1345.8,778.7 1346.4,778.7 1346.9,775.8 1347.5,775.8 1348.0,778.7 1348.6,778.7 1349.1,778.7 1349.7,778.7 1350.2,778.7 1350.8,778.7 1351.3,775.8 1351.9,778.7 1352.4,775.8 1353.0,775.8 1353.5,778.7 1354.1,775.8 1354.6,778.7 1355.2,775.8 1355.7,778.7 1356.3,775.8 1356.8,775.8 1357.4,778.7 1357.9,775.8 1358.5,775.8 1359.0,775.8 1359.6,775.8 1360.1,778.7 1360.7,775.8 1361.2,775.8 1361.8,775.8 1362.3,784.6 1362.9,778.7 1363.4,781.7 1364.0,778.7 1364.5,778.7 1365.1,781.7 1365.6,775.8 1366.2,778.7 1366.7,778.7 1367.3,775.8 1367.8,775.8 1368.4,775.8 1368.9,775.8 1369.5,775.8 1370.0,775.8 1370.6,775.8 1371.1,775.8 1371.7,778.7 1372.2,778.7 1372.8,781.7 1373.3,775.8 1373.9,778.7 1374.4,778.7 1375.0,781.7 1375.5,778.7 1376.1,775.8 1376.6,778.7 1377.2,775.8 1377.7,778.7 1378.3,775.8 1378.8,778.7 1379.4,778.7 1379.9,778.7 1380.5,778.7 1381.0,775.8 1381.6,775.8 1382.1,775.8 1382.7,778.7 1383.2,775.8 1383.8,778.7 1384.3,775.8 1384.9,775.8 1385.4,778.7 1386.0,775.8 1386.5,778.7 1387.1,775.8 1387.6,775.8 1388.2,775.8 1388.7,775.8 1389.3,778.7 1389.8,775.8 1390.4,775.8 1390.9,778.7 1391.5,775.8 1392.0,778.7 1392.6,775.8 1393.1,775.8 1393.7,775.8 1394.2,778.7 1394.8,775.8 1395.3,775.8 1395.9,778.7 1396.4,775.8 1397.0,778.7 1397.5,775.8 1398.1,781.7 1398.6,775.8 1399.2,775.8 1399.7,781.7 1400.3,778.7 1400.8,775.8 1401.4,775.8 1401.9,775.8 1402.5,775.8 1403.0,775.8 1403.6,778.7 1404.1,778.7 1404.7,775.8 1405.2,775.8 1405.8,775.8 1406.3,775.8 1406.9,775.8 1407.4,775.8 1408.0,778.7 1408.5,775.8 1409.1,775.8 1409.6,775.8 1410.2,778.7 1410.7,778.7 1411.3,781.7 1411.8,778.7 1412.4,775.8 1412.9,778.7 1413.5,778.7 1414.0,778.7 1414.6,778.7 1415.1,775.8 1415.7,775.8 1416.2,778.7 1416.8,778.7 1417.3,775.8 1417.9,775.8 1418.4,778.7 1419.0,775.8 1419.5,778.7 1420.1,778.7 1420.6,778.7 1421.2,778.7 1421.7,778.7 1422.3,778.7 1422.8,778.7 1423.4,778.7 1423.9,781.7 1424.5,778.7 1425.0,775.8 1425.6,781.7 1426.1,775.8 1426.7,778.7 1427.2,775.8 1427.8,778.7 1428.3,775.8 1428.9,775.8 1429.4,778.7 1430.0,775.8 1430.5,775.8 1431.1,775.8 1431.6,775.8 1432.2,778.7 1432.7,775.8 1433.3,775.8 1433.8,775.8 1434.4,781.7 1434.9,775.8 1435.5,775.8 1436.0,775.8 1436.6,775.8 1437.1,775.8 1437.7,775.8 1438.2,778.7 1438.8,775.8 1439.3,775.8 1439.9,781.7 1440.4,775.8 1441.0,778.7 1441.5,778.7 1442.1,775.8 1442.6,781.7 1443.2,775.8 1443.7,775.8 1444.3,775.8 1444.8,775.8 1445.4,778.7 1445.9,775.8 1446.5,775.8 1447.0,775.8 1447.6,775.8 1448.1,775.8 1448.7,775.8 1449.2,778.7 1449.8,778.7 1450.3,778.7 1450.9,775.8 1451.4,775.8 1452.0,775.8 1452.5,778.7 1453.1,778.7 1453.6,775.8 1454.2,778.7 1454.7,775.8 1455.3,775.8 1455.8,778.7 1456.4,778.7 1456.9,778.7 1457.5,775.8 1458.0,778.7 1458.6,778.7 1459.1,775.8 1459.7,778.7 1460.2,778.7 1460.8,775.8 1461.3,781.7 1461.9,778.7 1462.4,775.8 1463.0,778.7 1463.5,775.8 1464.1,775.8 1464.6,775.8 1465.2,775.8 1465.7,778.7 1466.3,778.7 1466.8,784.6 1467.4,778.7 1467.9,775.8 1468.5,778.7 1469.0,778.7 1469.6,778.7 1470.1,778.7 1470.7,775.8 1471.2,775.8 1471.8,781.7 1472.3,778.7 1472.9,775.8 1473.4,775.8 1474.0,775.8 1474.5,775.8 1475.1,787.5 1475.6,778.7 1476.2,778.7 1476.7,775.8 1477.3,775.8 1477.8,775.8 1478.4,775.8 1478.9,775.8 1479.5,775.8 1480.0,775.8 1480.6,778.7 1481.1,775.8 1481.7,775.8 1482.2,778.7 1482.8,775.8 1483.3,775.8 1483.9,775.8 1484.4,775.8 1485.0,778.7 1485.5,775.8 1486.1,778.7 1486.6,775.8 1487.2,775.8 1487.7,775.8 1488.3,775.8 1488.8,775.8 1489.4,775.8 1489.9,775.8 1490.5,778.7 1491.0,775.8 1491.6,775.8 1492.1,778.7 1492.7,775.8 1493.2,778.7 1493.8,775.8 1494.3,778.7 1494.9,775.8 1495.4,775.8 1496.0,775.8 1496.5,775.8 1497.1,775.8 1497.6,778.7 1498.2,778.7 1498.7,775.8 1499.3,778.7 1499.8,775.8 1500.4,778.7 1500.9,778.7 1501.5,778.7 1502.0,775.8 1502.6,775.8 1503.1,778.7 1503.7,775.8 1504.2,778.7 1504.8,775.8 1505.3,775.8 1505.9,778.7 1506.4,778.7 1507.0,775.8 1507.5,778.7 1508.1,775.8 1508.6,778.7 1509.2,775.8 1509.7,781.7 1510.3,775.8 1510.8,778.7 1511.4,775.8 1511.9,784.6 1512.5,775.8 1513.0,778.7 1513.6,775.8 1514.1,775.8 1514.7,775.8 1515.2,778.7 1515.8,775.8 1516.3,775.8 1516.9,778.7 1517.4,775.8 1518.0,778.7 1518.5,775.8 1519.1,775.8 1519.6,775.8 1520.2,775.8 1520.7,775.8 1521.3,778.7 1521.8,775.8 1522.4,775.8 1522.9,775.8 1523.5,775.8 1524.0,775.8 1524.6,775.8 1525.1,775.8 1525.7,775.8 1526.2,775.8 1526.8,778.7 1527.3,775.8 1527.9,775.8 1528.4,775.8 1529.0,775.8 1529.5,778.7 1530.1,778.7 1530.6,784.6 1531.2,775.8 1531.7,775.8 1532.3,778.7 1532.8,778.7 1533.4,781.7 1533.9,775.8 1534.5,778.7 1535.0,775.8 1535.6,775.8 1536.1,778.7 1536.7,778.7 1537.2,778.7 1537.8,778.7 1538.3,775.8 1538.9,778.7 1539.4,775.8 1540.0,778.7 1540.5,778.7 1541.1,778.7 1541.6,778.7 1542.2,778.7 1542.7,775.8 1543.3,781.7 1543.8,778.7 1544.4,778.7 1544.9,778.7 1545.5,775.8 1546.0,778.7 1546.6,775.8 1547.1,778.7 1547.7,778.7 1548.2,775.8 1548.8,778.7 1549.3,778.7 1549.9,775.8 1550.4,778.7 1551.0,775.8 1551.5,775.8 1552.1,775.8 1552.6,778.7 1553.2,778.7 1553.7,775.8 1554.3,778.7 1554.8,775.8 1555.4,775.8 1555.9,778.7 1556.5,775.8 1557.0,775.8 1557.6,775.8 1558.1,775.8 1558.7,778.7 1559.2,775.8 1559.8,778.7 1560.3,778.7 1560.9,778.7 1561.4,775.8 1562.0,775.8 1562.5,775.8 1563.1,778.7 1563.6,775.8 1564.2,775.8 1564.7,775.8 1565.3,775.8 1565.8,775.8 1566.4,778.7 1566.9,775.8 1567.5,778.7 1568.0,781.7 1568.6,778.7 1569.1,775.8 1569.7,778.7 1570.2,775.8 1570.8,778.7 1571.3,775.8 1571.9,778.7 1572.4,775.8 1573.0,775.8 1573.5,775.8 1574.1,778.7 1574.6,778.7 1575.2,775.8 1575.7,775.8 1576.3,778.7 1576.8,775.8 1577.4,775.8 1577.9,775.8 1578.5,778.7 1579.0,775.8 1579.6,775.8 1580.1,775.8 1580.7,778.7 1581.2,778.7 1581.8,778.7 1582.3,778.7 1582.9,778.7 1583.4,775.8 1584.0,775.8 1584.5,778.7 1585.1,778.7 1585.6,778.7 1586.2,778.7 1586.7,778.7 1587.3,778.7 1587.8,775.8 1588.4,775.8 1588.9,775.8 1589.5,778.7 1590.0,778.7 1590.6,775.8 1591.1,775.8 1591.7,775.8 1592.2,784.6 1592.8,775.8 1593.3,775.8 1593.9,775.8 1594.4,778.7 1595.0,775.8 1595.5,775.8 1596.1,778.7 1596.6,775.8 1597.2,775.8 1597.7,775.8 1598.3,778.7 1598.8,775.8 1599.4,775.8 1599.9,775.8 1600.5,775.8 1601.0,775.8 1601.6,775.8 1602.1,775.8 1602.7,775.8 1603.2,775.8 1603.8,775.8 1604.3,775.8 1604.9,775.8 1605.4,775.8 1606.0,775.8 1606.5,778.7 1607.1,775.8 1607.6,775.8 1608.2,778.7 1608.7,775.8 1609.3,778.7 1609.8,778.7 1610.4,775.8 1610.9,778.7 1611.5,775.8 1612.0,775.8 1612.6,775.8 1613.1,775.8 1613.7,775.8 1614.2,775.8 1614.8,775.8 1615.3,775.8 1615.9,775.8 1616.4,775.8 1617.0,778.7 1617.5,775.8 1618.1,775.8 1618.6,778.7 1619.2,775.8 1619.7,775.8 1620.3,775.8 1620.8,778.7 1621.4,775.8 1621.9,778.7 1622.5,778.7 1623.0,775.8 1623.6,775.8 1624.1,775.8 1624.7,775.8 1625.2,778.7 1625.8,778.7 1626.3,778.7 1626.9,775.8 1627.4,775.8 1628.0,778.7 1628.5,778.7 1629.1,775.8 1629.6,775.8 1630.2,775.8 1630.7,775.8 1631.3,778.7 1631.8,775.8 1632.4,778.7 1632.9,775.8 1633.5,778.7 1634.0,778.7 1634.6,775.8 1635.1,775.8 1635.7,778.7 1636.2,775.8 1636.8,775.8 1637.3,775.8 1637.9,775.8 1638.4,775.8 1639.0,775.8 1639.5,775.8 1640.1,775.8 1640.6,778.7 1641.2,778.7 1641.7,778.7 1642.3,778.7 1642.8,778.7 1643.4,775.8 1643.9,778.7 1644.5,775.8 1645.0,778.7 1645.6,778.7 1646.1,778.7 1646.7,781.7 1647.2,775.8 1647.8,778.7 1648.3,778.7 1648.9,775.8 1649.4,775.8 1650.0,775.8 1650.5,778.7 1651.1,775.8 1651.6,778.7 1652.2,775.8 1652.7,775.8 1653.3,775.8 1653.8,781.7 1654.4,775.8 1654.9,775.8 1655.5,775.8 1656.0,775.8 1656.6,781.7 1657.1,775.8 1657.7,778.7 1658.2,775.8 1658.8,775.8 1659.3,775.8 1659.9,775.8 1660.4,775.8 1661.0,775.8 1661.5,775.8 1662.1,775.8 1662.6,778.7 1663.2,778.7 1663.7,778.7 1664.3,775.8 1664.8,778.7 1665.4,781.7 1665.9,781.7 1666.5,778.7 1667.0,778.7 1667.6,775.8 1668.1,775.8 1668.7,778.7 1669.2,775.8 1669.8,778.7 1670.3,778.7 1670.9,778.7 1671.4,775.8 1672.0,775.8 1672.5,775.8 1673.1,775.8 1673.6,778.7 1674.2,775.8 1674.7,775.8 1675.3,775.8 1675.8,778.7 1676.4,778.7 1676.9,775.8 1677.5,775.8 1678.0,778.7 1678.6,778.7 1679.1,775.8 1679.7,775.8 1680.2,778.7 1680.8,775.8 1681.3,778.7 1681.9,778.7 1682.4,778.7 1683.0,778.7 1683.5,778.7 1684.1,775.8 1684.6,775.8 1685.2,778.7 1685.7,778.7 1686.3,775.8 1686.8,778.7 1687.4,778.7 1687.9,781.7 1688.5,778.7 1689.0,775.8 1689.6,775.8 1690.1,775.8 1690.7,778.7 1691.2,778.7 1691.8,775.8 1692.3,775.8 1692.9,775.8 1693.4,775.8 1694.0,775.8 1694.5,781.7 1695.1,778.7 1695.6,775.8 1696.2,775.8 1696.7,775.8 1697.3,775.8 1697.8,775.8 1698.4,778.7 1698.9,775.8 1699.5,775.8 1700.0,775.8 1700.6,778.7 1701.1,778.7 1701.7,775.8 1702.2,778.7 1702.8,775.8 1703.3,775.8 1703.9,778.7 1704.4,775.8 1705.0,778.7 1705.5,778.7 1706.1,778.7 1706.6,775.8 1707.2,775.8 1707.7,775.8 1708.3,778.7 1708.8,775.8 1709.4,778.7 1709.9,778.7 1710.5,775.8 1711.0,775.8 1711.6,775.8 1712.1,775.8 1712.7,775.8 1713.2,775.8 1713.8,775.8 1714.3,778.7 1714.9,784.6 1715.4,775.8 1716.0,778.7 1716.5,778.7 1717.1,775.8 1717.6,775.8 1718.2,775.8 1718.7,775.8 1719.3,775.8 1719.8,778.7 1720.4,778.7 1720.9,778.7 1721.5,775.8 1722.0,775.8 1722.6,775.8 1723.1,775.8 1723.7,775.8 1724.2,787.5 1724.8,778.7 1725.3,775.8 1725.9,775.8 1726.4,775.8 1727.0,778.7 1727.5,775.8 1728.1,775.8 1728.6,775.8 1729.2,775.8 1729.7,775.8 1730.3,775.8 1730.8,775.8 1731.4,775.8 1731.9,775.8 1732.5,778.7 1733.0,775.8 1733.6,775.8 1734.1,775.8 1734.7,778.7 1735.2,778.7 1735.8,775.8 1736.3,775.8 1736.9,778.7 1737.4,778.7 1738.0,778.7 1738.5,775.8 1739.1,775.8 1739.6,775.8 1740.2,775.8 1740.7,775.8 1741.3,778.7 1741.8,775.8 1742.4,781.7 1742.9,778.7 1743.5,775.8 1744.0,778.7 1744.6,778.7 1745.1,778.7 1745.7,775.8 1746.2,775.8 1746.8,775.8 1747.3,778.7 1747.9,775.8 1748.4,778.7 1749.0,775.8 1749.5,775.8 1750.1,787.5 1750.6,775.8 1751.2,778.7 1751.7,775.8 1752.3,778.7 1752.8,775.8 1753.4,775.8 1753.9,775.8 1754.5,778.7 1755.0,775.8 1755.6,778.7 1756.1,775.8 1756.7,775.8 1757.2,778.7 1757.8,775.8 1758.3,775.8 1758.9,775.8 1759.4,775.8 1760.0,775.8 1760.5,775.8 1761.1,775.8 1761.6,775.8 1762.2,775.8 1762.7,775.8 1763.3,784.6 1763.8,775.8 1764.4,778.7 1764.9,775.8 1765.5,778.7 1766.0,775.8 1766.6,775.8 1767.1,775.8 1767.7,775.8 1768.2,775.8 1768.8,778.7" fill="none" stroke="#4285f4" stroke-width="2.2" stroke-linejoin="round"/>
<path d="M191.4 775.8V935.0M196.7 781.7V935.0M212.5 778.7V935.0M249.3 775.8V935.0M398.6 775.8V935.0M411.0 775.8V935.0M413.4 775.8V935.0M439.2 851.9V935.0M463.6 778.7V935.0M480.5 846.4V935.0M497.3 778.7V935.0M498.9 778.7V935.0M519.9 784.6V935.0M591.6 778.7V935.0M636.4 775.8V935.0M805.0 778.7V935.0M811.4 778.7V935.0M832.5 778.7V935.0M840.8 775.8V935.0M941.3 778.7V935.0M1011.6 778.7V935.0M1022.6 775.8V935.0M1024.6 781.7V935.0M1066.9 778.7V935.0M1151.6 854.9V935.0M1169.7 775.8V935.0M1306.2 778.7V935.0M1435.4 775.8V935.0M1504.1 778.7V935.0M234.2 777.3V807.9M246.6 777.3V831.3M268.4 777.3V790.4M307.9 777.3V790.4M313.0 777.3V816.7M317.3 777.3V825.5M333.7 777.3V805.0M346.4 777.3V787.5M352.1 777.3V813.8M381.6 777.3V787.5M503.2 777.3V805.0M584.2 777.3V805.0M605.3 777.3V799.2M648.5 777.3V816.7M659.9 777.3V883.9M679.0 777.3V802.1M682.8 777.3V796.3M797.3 777.3V807.9M906.1 777.3V799.2M1005.0 777.3V793.3M1091.3 777.3V880.9M1105.4 777.3V816.7M1156.3 777.3V866.3M1165.0 777.3V816.7M1167.0 777.3V819.6M1174.0 777.3V854.7M1179.7 777.3V796.3M1194.8 777.3V860.5M1231.0 777.3V834.2M1243.0 777.3V857.6M1416.0 777.3V805.0M1474.0 777.3V886.8M1538.2 777.3V793.3M1603.2 777.3V787.5M1618.3 777.3V789.0M1763.3 777.3V898.5" fill="none" stroke="#4285f4" stroke-width="2.3"/>
</svg>
<div class="t" style="left:815.6px;top:587px;width:200px;text-align:center;font-size:20.2px;font-weight:bold;color:#757575;-webkit-text-stroke:0.25px #757575">GPU Load</div>
<div class="t" style="left:51px;top:620.0px;width:60px;text-align:right;font-size:11.7px;color:#222;-webkit-text-stroke:0.28px #222">100</div>
<div class="t" style="left:51px;top:692.5px;width:60px;text-align:right;font-size:11.7px;color:#222;-webkit-text-stroke:0.28px #222">75</div>
<div class="t" style="left:51px;top:763.0px;width:60px;text-align:right;font-size:11.7px;color:#222;-webkit-text-stroke:0.28px #222">50</div>
<div class="t" style="left:17px;top:760px;width:100px;text-align:center;font-size:12px;font-weight:bold;color:#222;transform:rotate(-90deg)">GPU Load</div>
<div class="abs" style="left:1904px;top:25px;width:1px;height:748px;background:#e1e1e1"></div>
<div class="abs" style="left:1905px;top:25px;width:6px;height:748px;background:#fff"></div>
<div class="abs" style="left:1905px;top:1px;width:6px;height:23px;background:#f8f9fa"></div>
<div class="abs" style="left:1904px;top:1px;width:1px;height:24px;background:#dcdcdc"></div>
<div class="abs" style="left:1906px;top:30px;width:10px;height:26px;border-radius:4px;background:#dadce0"></div>
<div class="abs" style="left:1905px;top:740px;width:6px;height:16px;border:1px solid #e0e0e0;border-right:0;background:#f8f9fa"></div>
<div class="abs" style="left:1905px;top:756px;width:6px;height:16px;border:1px solid #e0e0e0;border-right:0;background:#f8f9fa"></div>
<svg class="ic" style="left:1907.5px;top:743px" width="4" height="30" viewBox="0 0 4 30"><path d="M0 6.5L4 2.5v4zM0 19.5h4v4z" fill="#8a8d90"/></svg>
</div>
<div class="abs" style="left:0;top:919px;width:1911px;height:13px;background:#fff"></div>
<div class="abs" style="left:0;top:919px;width:1911px;height:1px;background:#e0e0e0"></div>
<div class="abs" style="left:0;top:919px;width:42px;height:13px;background:#f8f9fa;border-right:1px solid #dcdcdc"></div>
<div class="abs" style="left:44px;top:920px;width:1259px;height:9.5px;border-radius:5px;background:#dadce0"></div>
<div class="abs" style="left:1873px;top:919px;width:16.5px;height:13px;border:1px solid #e0e0e0;border-bottom:0;background:#f8f9fa"></div>
<div class="abs" style="left:1889.5px;top:919px;width:16px;height:13px;border:1px solid #e0e0e0;border-bottom:0;border-left:0;background:#f8f9fa"></div>
<svg class="ic" style="left:1878px;top:922px" width="24" height="8" viewBox="0 0 24 8"><path d="M4.3 1.2v5.6L1.2 4zM17.7 1.2v5.6L20.8 4z" fill="#8a8d90"/></svg>
<div class="abs" style="left:1905.5px;top:920px;width:6px;height:12px;background:#f8f9fa;border-left:1px solid #e0e0e0"></div>
<div class="abs" style="left:0;top:932px;width:1911px;height:1px;background:#dadce0"></div>
<div class="abs" style="left:0;top:933px;width:1911px;height:36px;background:#f9fbfd"></div>
<div class="abs" style="left:617px;top:933px;width:135.5px;height:36px;background:#e1e9f7"></div>
<svg class="ic" style="left:52.5px;top:946.5px" width="11" height="11" viewBox="0 0 11 11"><path d="M5.5 0.4v10.2M0.4 5.5h10.2" stroke="#444746" stroke-width="1.6"/></svg>
<svg class="ic" style="left:91px;top:946.7px" width="14" height="11" viewBox="0 0 14 11"><path d="M0 1.2h14M0 5.5h14M0 9.8h14" stroke="#444746" stroke-width="1.6"/></svg>
<div class="tab" style="left:143.2px;">Agenda</div>
<div class="dd" style="left:207.0px;top:950px;"></div>
<div class="tab" style="left:239.7px;">TestPlan</div>
<div class="dd" style="left:310.0px;top:950px;"></div>
<div class="tab" style="left:343.7px;">Bugs</div>
<div class="dd" style="left:389.0px;top:950px;"></div>
<div class="tab" style="left:422.0px;">Devices</div>
<div class="dd" style="left:487.0px;top:950px;"></div>
<div class="tab" style="left:520.6px;">Checklist</div>
<div class="dd" style="left:596.0px;top:950px;"></div>
<div class="tab" style="left:629.0px;color:#0b57d0;font-weight:bold;">Performance</div>
<div class="dd" style="left:732.0px;top:950px;border-top-color:#0b57d0"></div>
<div class="tab" style="left:764.3px;">Feedback</div>
<div class="dd" style="left:842.5px;top:950px;"></div>
<svg class="ic" style="left:1884px;top:946.8px" width="8" height="12" viewBox="0 0 8 12"><path d="M6.4 1L1.6 5.7l4.8 4.7" fill="none" stroke="#444746" stroke-width="1.6"/></svg>
<div class="abs" style="left:0;top:969px;width:1911px;height:2px;background:#2b2622"></div>
</body></html>
